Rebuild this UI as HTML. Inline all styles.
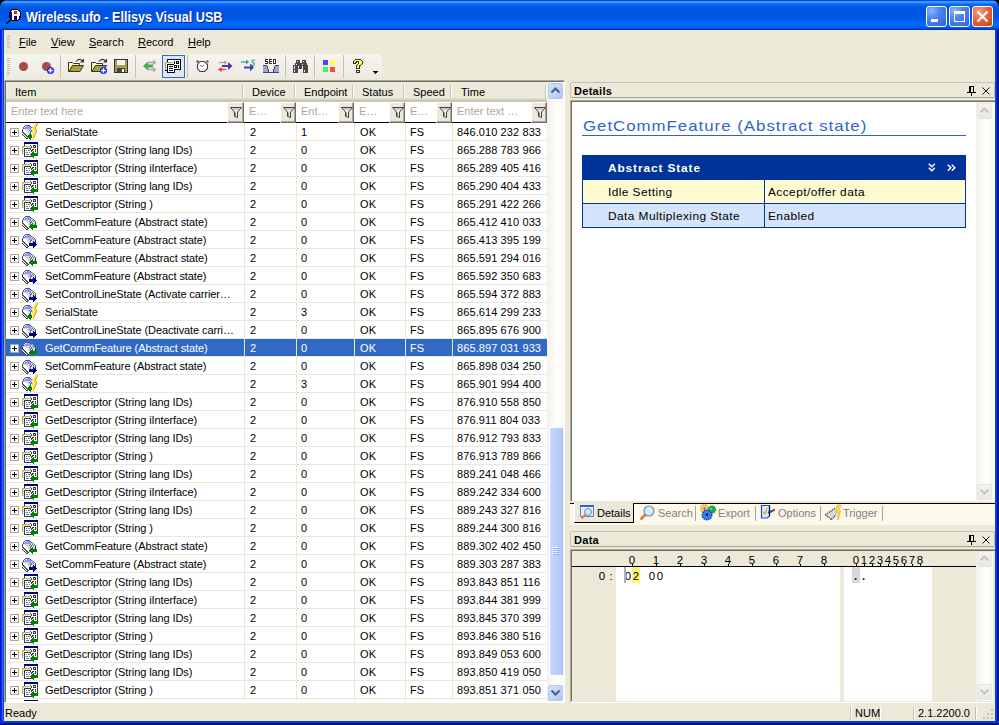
<!DOCTYPE html><html><head><meta charset="utf-8"><style>
*{margin:0;padding:0;box-sizing:border-box}
html,body{width:999px;height:725px;overflow:hidden;background:#000}
body{font-family:"Liberation Sans",sans-serif;font-size:11px;color:#000;position:relative}
.a{position:absolute}
.t{position:absolute;white-space:nowrap;line-height:13px}
svg{position:absolute;overflow:visible}
.sep{position:absolute;width:1px;background:#C5C2B2;border-right:1px solid #fff}
</style></head><body>
<svg width="0" height="0" style="position:absolute"><defs><symbol id="ig" viewBox="0 0 17 18" shape-rendering="crispEdges"><rect x="4" y="3" width="5" height="1" fill="#5454B4"/><rect x="3" y="4" width="1" height="1" fill="#5454B4"/><rect x="4" y="4" width="2" height="1" fill="#C8E4FF"/><rect x="6" y="4" width="3" height="1" fill="#9494F4"/><rect x="9" y="4" width="1" height="1" fill="#5454B4"/><rect x="2" y="5" width="1" height="1" fill="#5454B4"/><rect x="3" y="5" width="1" height="1" fill="#C8E4FF"/><rect x="4" y="5" width="6" height="1" fill="#9494F4"/><rect x="10" y="5" width="1" height="1" fill="#707070"/><rect x="11" y="5" width="1" height="1" fill="#A8A8A8"/><rect x="2" y="6" width="1" height="1" fill="#5454B4"/><rect x="3" y="6" width="7" height="1" fill="#9494F4"/><rect x="10" y="6" width="2" height="1" fill="#D8D8D8"/><rect x="12" y="6" width="1" height="1" fill="#707070"/><rect x="1" y="7" width="1" height="1" fill="#707070"/><rect x="2" y="7" width="7" height="1" fill="#D8D8D8"/><rect x="9" y="7" width="1" height="1" fill="#6C6CE0"/><rect x="10" y="7" width="1" height="1" fill="#D8D8D8"/><rect x="11" y="7" width="1" height="1" fill="#6C6CE0"/><rect x="12" y="7" width="1" height="1" fill="#D8D8D8"/><rect x="13" y="7" width="1" height="1" fill="#707070"/><rect x="1" y="8" width="1" height="1" fill="#3A3A3A"/><rect x="2" y="8" width="3" height="1" fill="#FFFFFF"/><rect x="5" y="8" width="3" height="1" fill="#D8D8D8"/><rect x="8" y="8" width="1" height="1" fill="#707070"/><rect x="9" y="8" width="1" height="1" fill="#D8D8D8"/><rect x="10" y="8" width="1" height="1" fill="#6C6CE0"/><rect x="11" y="8" width="1" height="1" fill="#D8D8D8"/><rect x="12" y="8" width="1" height="1" fill="#6C6CE0"/><rect x="13" y="8" width="1" height="1" fill="#D8D8D8"/><rect x="14" y="8" width="1" height="1" fill="#707070"/><rect x="1" y="9" width="1" height="1" fill="#3A3A3A"/><rect x="2" y="9" width="4" height="1" fill="#FFFFFF"/><rect x="6" y="9" width="3" height="1" fill="#D8D8D8"/><rect x="9" y="9" width="1" height="1" fill="#707070"/><rect x="10" y="9" width="1" height="1" fill="#6C6CE0"/><rect x="11" y="9" width="3" height="1" fill="#D8D8D8"/><rect x="14" y="9" width="1" height="1" fill="#3A3A3A"/><rect x="1" y="10" width="1" height="1" fill="#707070"/><rect x="2" y="10" width="1" height="1" fill="#3A3A3A"/><rect x="3" y="10" width="4" height="1" fill="#FFFFFF"/><rect x="7" y="10" width="2" height="1" fill="#D8D8D8"/><rect x="9" y="10" width="1" height="1" fill="#707070"/><rect x="10" y="10" width="1" height="1" fill="#FFFFFF"/><rect x="11" y="10" width="1" height="1" fill="#008000"/><rect x="12" y="10" width="2" height="1" fill="#D8D8D8"/><rect x="14" y="10" width="1" height="1" fill="#3A3A3A"/><rect x="1" y="11" width="1" height="1" fill="#FFFFFF"/><rect x="2" y="11" width="1" height="1" fill="#707070"/><rect x="3" y="11" width="1" height="1" fill="#3A3A3A"/><rect x="4" y="11" width="3" height="1" fill="#FFFFFF"/><rect x="7" y="11" width="2" height="1" fill="#D8D8D8"/><rect x="9" y="11" width="1" height="1" fill="#707070"/><rect x="10" y="11" width="2" height="1" fill="#008000"/><rect x="12" y="11" width="1" height="1" fill="#D8D8D8"/><rect x="13" y="11" width="1" height="1" fill="#A8A8A8"/><rect x="14" y="11" width="1" height="1" fill="#3A3A3A"/><rect x="1" y="12" width="1" height="1" fill="#3A3A3A"/><rect x="2" y="12" width="1" height="1" fill="#FFFFFF"/><rect x="3" y="12" width="1" height="1" fill="#707070"/><rect x="4" y="12" width="1" height="1" fill="#3A3A3A"/><rect x="5" y="12" width="3" height="1" fill="#FFFFFF"/><rect x="8" y="12" width="1" height="1" fill="#D8D8D8"/><rect x="9" y="12" width="7" height="1" fill="#008000"/><rect x="2" y="13" width="1" height="1" fill="#3A3A3A"/><rect x="3" y="13" width="1" height="1" fill="#FFFFFF"/><rect x="4" y="13" width="1" height="1" fill="#707070"/><rect x="5" y="13" width="1" height="1" fill="#3A3A3A"/><rect x="6" y="13" width="2" height="1" fill="#FFFFFF"/><rect x="8" y="13" width="8" height="1" fill="#008000"/><rect x="3" y="14" width="1" height="1" fill="#3A3A3A"/><rect x="4" y="14" width="1" height="1" fill="#FFFFFF"/><rect x="5" y="14" width="1" height="1" fill="#707070"/><rect x="6" y="14" width="1" height="1" fill="#3A3A3A"/><rect x="7" y="14" width="1" height="1" fill="#FFFFFF"/><rect x="8" y="14" width="1" height="1" fill="#707070"/><rect x="9" y="14" width="7" height="1" fill="#008000"/><rect x="4" y="15" width="1" height="1" fill="#3A3A3A"/><rect x="5" y="15" width="1" height="1" fill="#FFFFFF"/><rect x="6" y="15" width="1" height="1" fill="#707070"/><rect x="7" y="15" width="1" height="1" fill="#3A3A3A"/><rect x="10" y="15" width="2" height="1" fill="#008000"/><rect x="5" y="16" width="2" height="1" fill="#3A3A3A"/><rect x="11" y="16" width="1" height="1" fill="#008000"/></symbol><symbol id="ip" viewBox="0 0 17 18" shape-rendering="crispEdges"><rect x="4" y="3" width="5" height="1" fill="#5454B4"/><rect x="3" y="4" width="1" height="1" fill="#5454B4"/><rect x="4" y="4" width="2" height="1" fill="#C8E4FF"/><rect x="6" y="4" width="3" height="1" fill="#9494F4"/><rect x="9" y="4" width="1" height="1" fill="#5454B4"/><rect x="2" y="5" width="1" height="1" fill="#5454B4"/><rect x="3" y="5" width="1" height="1" fill="#C8E4FF"/><rect x="4" y="5" width="6" height="1" fill="#9494F4"/><rect x="10" y="5" width="1" height="1" fill="#707070"/><rect x="11" y="5" width="1" height="1" fill="#A8A8A8"/><rect x="2" y="6" width="1" height="1" fill="#5454B4"/><rect x="3" y="6" width="7" height="1" fill="#9494F4"/><rect x="10" y="6" width="2" height="1" fill="#D8D8D8"/><rect x="12" y="6" width="1" height="1" fill="#707070"/><rect x="1" y="7" width="1" height="1" fill="#707070"/><rect x="2" y="7" width="7" height="1" fill="#D8D8D8"/><rect x="9" y="7" width="1" height="1" fill="#6C6CE0"/><rect x="10" y="7" width="1" height="1" fill="#D8D8D8"/><rect x="11" y="7" width="1" height="1" fill="#6C6CE0"/><rect x="12" y="7" width="1" height="1" fill="#D8D8D8"/><rect x="13" y="7" width="1" height="1" fill="#707070"/><rect x="1" y="8" width="1" height="1" fill="#3A3A3A"/><rect x="2" y="8" width="3" height="1" fill="#FFFFFF"/><rect x="5" y="8" width="3" height="1" fill="#D8D8D8"/><rect x="8" y="8" width="1" height="1" fill="#707070"/><rect x="9" y="8" width="1" height="1" fill="#D8D8D8"/><rect x="10" y="8" width="1" height="1" fill="#6C6CE0"/><rect x="11" y="8" width="1" height="1" fill="#D8D8D8"/><rect x="12" y="8" width="1" height="1" fill="#6C6CE0"/><rect x="13" y="8" width="1" height="1" fill="#D8D8D8"/><rect x="14" y="8" width="1" height="1" fill="#707070"/><rect x="1" y="9" width="1" height="1" fill="#3A3A3A"/><rect x="2" y="9" width="4" height="1" fill="#FFFFFF"/><rect x="6" y="9" width="3" height="1" fill="#D8D8D8"/><rect x="9" y="9" width="1" height="1" fill="#707070"/><rect x="10" y="9" width="1" height="1" fill="#6C6CE0"/><rect x="11" y="9" width="3" height="1" fill="#D8D8D8"/><rect x="14" y="9" width="1" height="1" fill="#3A3A3A"/><rect x="1" y="10" width="1" height="1" fill="#707070"/><rect x="2" y="10" width="1" height="1" fill="#3A3A3A"/><rect x="3" y="10" width="4" height="1" fill="#FFFFFF"/><rect x="7" y="10" width="2" height="1" fill="#D8D8D8"/><rect x="9" y="10" width="1" height="1" fill="#707070"/><rect x="10" y="10" width="1" height="1" fill="#FFFFFF"/><rect x="11" y="10" width="1" height="1" fill="#D8D8D8"/><rect x="12" y="10" width="1" height="1" fill="#000080"/><rect x="13" y="10" width="1" height="1" fill="#D8D8D8"/><rect x="14" y="10" width="1" height="1" fill="#3A3A3A"/><rect x="1" y="11" width="1" height="1" fill="#FFFFFF"/><rect x="2" y="11" width="1" height="1" fill="#707070"/><rect x="3" y="11" width="1" height="1" fill="#3A3A3A"/><rect x="4" y="11" width="3" height="1" fill="#FFFFFF"/><rect x="7" y="11" width="2" height="1" fill="#D8D8D8"/><rect x="9" y="11" width="1" height="1" fill="#707070"/><rect x="10" y="11" width="1" height="1" fill="#FFFFFF"/><rect x="11" y="11" width="1" height="1" fill="#D8D8D8"/><rect x="12" y="11" width="2" height="1" fill="#000080"/><rect x="14" y="11" width="1" height="1" fill="#3A3A3A"/><rect x="1" y="12" width="1" height="1" fill="#3A3A3A"/><rect x="2" y="12" width="1" height="1" fill="#FFFFFF"/><rect x="3" y="12" width="1" height="1" fill="#707070"/><rect x="4" y="12" width="1" height="1" fill="#3A3A3A"/><rect x="5" y="12" width="3" height="1" fill="#FFFFFF"/><rect x="8" y="12" width="7" height="1" fill="#000080"/><rect x="2" y="13" width="1" height="1" fill="#3A3A3A"/><rect x="3" y="13" width="1" height="1" fill="#FFFFFF"/><rect x="4" y="13" width="1" height="1" fill="#707070"/><rect x="5" y="13" width="1" height="1" fill="#3A3A3A"/><rect x="6" y="13" width="2" height="1" fill="#FFFFFF"/><rect x="8" y="13" width="8" height="1" fill="#000080"/><rect x="3" y="14" width="1" height="1" fill="#3A3A3A"/><rect x="4" y="14" width="1" height="1" fill="#FFFFFF"/><rect x="5" y="14" width="1" height="1" fill="#707070"/><rect x="6" y="14" width="1" height="1" fill="#3A3A3A"/><rect x="7" y="14" width="1" height="1" fill="#FFFFFF"/><rect x="8" y="14" width="7" height="1" fill="#000080"/><rect x="4" y="15" width="1" height="1" fill="#3A3A3A"/><rect x="5" y="15" width="1" height="1" fill="#FFFFFF"/><rect x="6" y="15" width="1" height="1" fill="#707070"/><rect x="7" y="15" width="1" height="1" fill="#3A3A3A"/><rect x="12" y="15" width="2" height="1" fill="#000080"/><rect x="5" y="16" width="2" height="1" fill="#3A3A3A"/><rect x="12" y="16" width="1" height="1" fill="#000080"/></symbol><symbol id="id" viewBox="0 0 17 18" shape-rendering="crispEdges"><rect x="3" y="1" width="14" height="1" fill="#000080"/><rect x="3" y="2" width="14" height="1" fill="#000080"/><rect x="3" y="3" width="1" height="1" fill="#3A3A3A"/><rect x="4" y="3" width="12" height="1" fill="#FFFFFF"/><rect x="16" y="3" width="1" height="1" fill="#3A3A3A"/><rect x="3" y="4" width="1" height="1" fill="#3A3A3A"/><rect x="4" y="4" width="5" height="1" fill="#FFFFFF"/><rect x="9" y="4" width="1" height="1" fill="#3A3A3A"/><rect x="10" y="4" width="2" height="1" fill="#FFFFFF"/><rect x="12" y="4" width="3" height="1" fill="#3A3A3A"/><rect x="15" y="4" width="1" height="1" fill="#FFFFFF"/><rect x="16" y="4" width="1" height="1" fill="#3A3A3A"/><rect x="1" y="5" width="8" height="1" fill="#A8A8A8"/><rect x="9" y="5" width="1" height="1" fill="#FFFFFF"/><rect x="10" y="5" width="1" height="1" fill="#3A3A3A"/><rect x="11" y="5" width="1" height="1" fill="#FFFFFF"/><rect x="12" y="5" width="1" height="1" fill="#3A3A3A"/><rect x="13" y="5" width="1" height="1" fill="#FFFFFF"/><rect x="14" y="5" width="1" height="1" fill="#3A3A3A"/><rect x="15" y="5" width="1" height="1" fill="#FFFFFF"/><rect x="16" y="5" width="1" height="1" fill="#3A3A3A"/><rect x="1" y="6" width="1" height="1" fill="#A8A8A8"/><rect x="2" y="6" width="1" height="1" fill="#FFE800"/><rect x="3" y="6" width="1" height="1" fill="#FFFFFF"/><rect x="4" y="6" width="1" height="1" fill="#FFE800"/><rect x="5" y="6" width="1" height="1" fill="#FFFFFF"/><rect x="6" y="6" width="1" height="1" fill="#FFE800"/><rect x="7" y="6" width="1" height="1" fill="#FFFFFF"/><rect x="8" y="6" width="1" height="1" fill="#FFE800"/><rect x="9" y="6" width="1" height="1" fill="#FFFFFF"/><rect x="10" y="6" width="1" height="1" fill="#3A3A3A"/><rect x="11" y="6" width="1" height="1" fill="#FFFFFF"/><rect x="12" y="6" width="3" height="1" fill="#3A3A3A"/><rect x="15" y="6" width="1" height="1" fill="#FFFFFF"/><rect x="16" y="6" width="1" height="1" fill="#3A3A3A"/><rect x="1" y="7" width="1" height="1" fill="#A8A8A8"/><rect x="2" y="7" width="1" height="1" fill="#FFFFFF"/><rect x="3" y="7" width="7" height="1" fill="#3A3A3A"/><rect x="10" y="7" width="6" height="1" fill="#FFFFFF"/><rect x="16" y="7" width="1" height="1" fill="#3A3A3A"/><rect x="1" y="8" width="1" height="1" fill="#A8A8A8"/><rect x="2" y="8" width="1" height="1" fill="#FFE800"/><rect x="3" y="8" width="1" height="1" fill="#3A3A3A"/><rect x="4" y="8" width="5" height="1" fill="#FFFFFF"/><rect x="9" y="8" width="1" height="1" fill="#3A3A3A"/><rect x="10" y="8" width="1" height="1" fill="#FFFFFF"/><rect x="11" y="8" width="2" height="1" fill="#3A3A3A"/><rect x="13" y="8" width="1" height="1" fill="#FFFFFF"/><rect x="14" y="8" width="1" height="1" fill="#3A3A3A"/><rect x="15" y="8" width="1" height="1" fill="#FFFFFF"/><rect x="16" y="8" width="1" height="1" fill="#3A3A3A"/><rect x="1" y="9" width="1" height="1" fill="#A8A8A8"/><rect x="2" y="9" width="1" height="1" fill="#FFFFFF"/><rect x="3" y="9" width="1" height="1" fill="#3A3A3A"/><rect x="4" y="9" width="1" height="1" fill="#FFFFFF"/><rect x="5" y="9" width="1" height="1" fill="#6C6CE0"/><rect x="6" y="9" width="1" height="1" fill="#FFFFFF"/><rect x="7" y="9" width="2" height="1" fill="#6C6CE0"/><rect x="9" y="9" width="1" height="1" fill="#FFFFFF"/><rect x="10" y="9" width="2" height="1" fill="#3A3A3A"/><rect x="12" y="9" width="2" height="1" fill="#FFFFFF"/><rect x="14" y="9" width="1" height="1" fill="#3A3A3A"/><rect x="15" y="9" width="1" height="1" fill="#FFFFFF"/><rect x="16" y="9" width="1" height="1" fill="#3A3A3A"/><rect x="1" y="10" width="1" height="1" fill="#A8A8A8"/><rect x="2" y="10" width="1" height="1" fill="#FFE800"/><rect x="3" y="10" width="1" height="1" fill="#3A3A3A"/><rect x="4" y="10" width="6" height="1" fill="#FFFFFF"/><rect x="10" y="10" width="1" height="1" fill="#3A3A3A"/><rect x="11" y="10" width="1" height="1" fill="#FFFFFF"/><rect x="12" y="10" width="1" height="1" fill="#008000"/><rect x="13" y="10" width="1" height="1" fill="#FFFFFF"/><rect x="14" y="10" width="1" height="1" fill="#3A3A3A"/><rect x="15" y="10" width="1" height="1" fill="#FFFFFF"/><rect x="16" y="10" width="1" height="1" fill="#3A3A3A"/><rect x="1" y="11" width="1" height="1" fill="#A8A8A8"/><rect x="2" y="11" width="1" height="1" fill="#FFFFFF"/><rect x="3" y="11" width="1" height="1" fill="#3A3A3A"/><rect x="4" y="11" width="1" height="1" fill="#FFFFFF"/><rect x="5" y="11" width="2" height="1" fill="#6C6CE0"/><rect x="7" y="11" width="1" height="1" fill="#FFFFFF"/><rect x="8" y="11" width="1" height="1" fill="#6C6CE0"/><rect x="9" y="11" width="2" height="1" fill="#FFFFFF"/><rect x="11" y="11" width="2" height="1" fill="#008000"/><rect x="13" y="11" width="3" height="1" fill="#FFFFFF"/><rect x="16" y="11" width="1" height="1" fill="#3A3A3A"/><rect x="1" y="12" width="1" height="1" fill="#A8A8A8"/><rect x="2" y="12" width="1" height="1" fill="#FFE800"/><rect x="3" y="12" width="1" height="1" fill="#3A3A3A"/><rect x="4" y="12" width="6" height="1" fill="#FFFFFF"/><rect x="10" y="12" width="7" height="1" fill="#008000"/><rect x="3" y="13" width="1" height="1" fill="#3A3A3A"/><rect x="4" y="13" width="1" height="1" fill="#FFFFFF"/><rect x="5" y="13" width="3" height="1" fill="#6C6CE0"/><rect x="8" y="13" width="1" height="1" fill="#FFFFFF"/><rect x="9" y="13" width="8" height="1" fill="#008000"/><rect x="3" y="14" width="1" height="1" fill="#3A3A3A"/><rect x="4" y="14" width="6" height="1" fill="#FFFFFF"/><rect x="10" y="14" width="7" height="1" fill="#008000"/><rect x="3" y="15" width="8" height="1" fill="#3A3A3A"/><rect x="11" y="15" width="2" height="1" fill="#008000"/><rect x="12" y="16" width="1" height="1" fill="#008000"/></symbol><symbol id="is" viewBox="0 0 17 18" shape-rendering="crispEdges"><rect x="14" y="0" width="1" height="1" fill="#FFF8A0"/><rect x="15" y="0" width="1" height="1" fill="#FFE800"/><rect x="16" y="0" width="1" height="1" fill="#E8A030"/><rect x="13" y="1" width="1" height="1" fill="#FFF8A0"/><rect x="14" y="1" width="2" height="1" fill="#FFE800"/><rect x="16" y="1" width="1" height="1" fill="#E8A030"/><rect x="4" y="2" width="5" height="1" fill="#5454B4"/><rect x="13" y="2" width="1" height="1" fill="#FFF8A0"/><rect x="14" y="2" width="1" height="1" fill="#FFE800"/><rect x="15" y="2" width="1" height="1" fill="#E8A030"/><rect x="3" y="3" width="1" height="1" fill="#5454B4"/><rect x="4" y="3" width="2" height="1" fill="#C8E4FF"/><rect x="6" y="3" width="3" height="1" fill="#9494F4"/><rect x="9" y="3" width="1" height="1" fill="#5454B4"/><rect x="12" y="3" width="1" height="1" fill="#FFF8A0"/><rect x="13" y="3" width="2" height="1" fill="#FFE800"/><rect x="15" y="3" width="1" height="1" fill="#E8A030"/><rect x="2" y="4" width="1" height="1" fill="#5454B4"/><rect x="3" y="4" width="1" height="1" fill="#C8E4FF"/><rect x="4" y="4" width="6" height="1" fill="#9494F4"/><rect x="10" y="4" width="1" height="1" fill="#707070"/><rect x="11" y="4" width="1" height="1" fill="#A8A8A8"/><rect x="12" y="4" width="1" height="1" fill="#FFF8A0"/><rect x="13" y="4" width="1" height="1" fill="#FFE800"/><rect x="14" y="4" width="1" height="1" fill="#E8A030"/><rect x="2" y="5" width="1" height="1" fill="#5454B4"/><rect x="3" y="5" width="7" height="1" fill="#9494F4"/><rect x="10" y="5" width="1" height="1" fill="#D8D8D8"/><rect x="11" y="5" width="1" height="1" fill="#FFF8A0"/><rect x="12" y="5" width="2" height="1" fill="#FFE800"/><rect x="14" y="5" width="1" height="1" fill="#E8A030"/><rect x="1" y="6" width="1" height="1" fill="#707070"/><rect x="2" y="6" width="7" height="1" fill="#D8D8D8"/><rect x="9" y="6" width="1" height="1" fill="#6C6CE0"/><rect x="10" y="6" width="1" height="1" fill="#D8D8D8"/><rect x="11" y="6" width="1" height="1" fill="#FFF8A0"/><rect x="12" y="6" width="3" height="1" fill="#FFE800"/><rect x="15" y="6" width="1" height="1" fill="#E8A030"/><rect x="1" y="7" width="1" height="1" fill="#3A3A3A"/><rect x="2" y="7" width="3" height="1" fill="#FFFFFF"/><rect x="5" y="7" width="3" height="1" fill="#D8D8D8"/><rect x="8" y="7" width="1" height="1" fill="#707070"/><rect x="9" y="7" width="1" height="1" fill="#D8D8D8"/><rect x="10" y="7" width="1" height="1" fill="#6C6CE0"/><rect x="11" y="7" width="1" height="1" fill="#D8D8D8"/><rect x="12" y="7" width="1" height="1" fill="#FFF8A0"/><rect x="13" y="7" width="2" height="1" fill="#FFE800"/><rect x="15" y="7" width="1" height="1" fill="#E8A030"/><rect x="1" y="8" width="1" height="1" fill="#3A3A3A"/><rect x="2" y="8" width="4" height="1" fill="#FFFFFF"/><rect x="6" y="8" width="3" height="1" fill="#D8D8D8"/><rect x="9" y="8" width="1" height="1" fill="#707070"/><rect x="10" y="8" width="1" height="1" fill="#6C6CE0"/><rect x="11" y="8" width="2" height="1" fill="#D8D8D8"/><rect x="13" y="8" width="1" height="1" fill="#FFF8A0"/><rect x="14" y="8" width="1" height="1" fill="#FFE800"/><rect x="15" y="8" width="1" height="1" fill="#E8A030"/><rect x="1" y="9" width="1" height="1" fill="#707070"/><rect x="2" y="9" width="1" height="1" fill="#3A3A3A"/><rect x="3" y="9" width="4" height="1" fill="#FFFFFF"/><rect x="7" y="9" width="2" height="1" fill="#D8D8D8"/><rect x="9" y="9" width="1" height="1" fill="#707070"/><rect x="10" y="9" width="1" height="1" fill="#FFFFFF"/><rect x="11" y="9" width="1" height="1" fill="#D8D8D8"/><rect x="12" y="9" width="1" height="1" fill="#FFF8A0"/><rect x="13" y="9" width="2" height="1" fill="#FFE800"/><rect x="15" y="9" width="1" height="1" fill="#E8A030"/><rect x="1" y="10" width="1" height="1" fill="#FFFFFF"/><rect x="2" y="10" width="1" height="1" fill="#707070"/><rect x="3" y="10" width="1" height="1" fill="#3A3A3A"/><rect x="4" y="10" width="3" height="1" fill="#FFFFFF"/><rect x="7" y="10" width="2" height="1" fill="#D8D8D8"/><rect x="9" y="10" width="1" height="1" fill="#008000"/><rect x="10" y="10" width="1" height="1" fill="#FFFFFF"/><rect x="11" y="10" width="1" height="1" fill="#D8D8D8"/><rect x="12" y="10" width="1" height="1" fill="#FFF8A0"/><rect x="13" y="10" width="1" height="1" fill="#FFE800"/><rect x="14" y="10" width="1" height="1" fill="#E8A030"/><rect x="1" y="11" width="1" height="1" fill="#3A3A3A"/><rect x="2" y="11" width="1" height="1" fill="#FFFFFF"/><rect x="3" y="11" width="1" height="1" fill="#707070"/><rect x="4" y="11" width="1" height="1" fill="#3A3A3A"/><rect x="5" y="11" width="3" height="1" fill="#FFFFFF"/><rect x="8" y="11" width="2" height="1" fill="#008000"/><rect x="10" y="11" width="1" height="1" fill="#D8D8D8"/><rect x="11" y="11" width="1" height="1" fill="#FFF8A0"/><rect x="12" y="11" width="2" height="1" fill="#FFE800"/><rect x="14" y="11" width="1" height="1" fill="#E8A030"/><rect x="2" y="12" width="1" height="1" fill="#3A3A3A"/><rect x="3" y="12" width="1" height="1" fill="#FFFFFF"/><rect x="4" y="12" width="1" height="1" fill="#707070"/><rect x="5" y="12" width="1" height="1" fill="#3A3A3A"/><rect x="6" y="12" width="1" height="1" fill="#FFFFFF"/><rect x="7" y="12" width="4" height="1" fill="#008000"/><rect x="11" y="12" width="1" height="1" fill="#FFF8A0"/><rect x="12" y="12" width="1" height="1" fill="#FFE800"/><rect x="13" y="12" width="1" height="1" fill="#E8A030"/><rect x="3" y="13" width="1" height="1" fill="#3A3A3A"/><rect x="4" y="13" width="1" height="1" fill="#FFFFFF"/><rect x="5" y="13" width="1" height="1" fill="#707070"/><rect x="6" y="13" width="5" height="1" fill="#008000"/><rect x="11" y="13" width="1" height="1" fill="#FFF8A0"/><rect x="12" y="13" width="1" height="1" fill="#FFE800"/><rect x="13" y="13" width="1" height="1" fill="#E8A030"/><rect x="4" y="14" width="1" height="1" fill="#3A3A3A"/><rect x="5" y="14" width="1" height="1" fill="#FFFFFF"/><rect x="6" y="14" width="1" height="1" fill="#707070"/><rect x="7" y="14" width="4" height="1" fill="#008000"/><rect x="11" y="14" width="1" height="1" fill="#FFF8A0"/><rect x="12" y="14" width="1" height="1" fill="#E8A030"/><rect x="5" y="15" width="2" height="1" fill="#3A3A3A"/><rect x="8" y="15" width="2" height="1" fill="#008000"/><rect x="11" y="15" width="1" height="1" fill="#FFF8A0"/><rect x="12" y="15" width="1" height="1" fill="#E8A030"/><rect x="9" y="16" width="1" height="1" fill="#008000"/><rect x="11" y="16" width="1" height="1" fill="#FFE800"/><rect x="11" y="17" width="1" height="1" fill="#FFF8A0"/></symbol></defs></svg>
<div class="a" style="left:0;top:0;width:999px;height:725px;background:#0A46D6;border-radius:8px 8px 0 0;overflow:hidden">
<div class="a" style="left:0;top:0;width:999px;height:30px;background:linear-gradient(#0040D8 0,#0A4EE0 1px,#3E96FF 1px,#3E96FF 3px,#1A7AFF 3px,#0A66F0 5px,#005AE4 7px,#0054E3 9px,#0054E3 17px,#0060F2 21px,#006AFF 23px,#0064F8 26px,#0058E8 28px,#0040C0 29px,#0030A8 30px)"></div>
<div class="a" style="left:0;top:30px;width:4px;height:695px;background:linear-gradient(90deg,#0010D8 0,#0010D8 1px,#0030E8 1px,#0030E8 2px,#1870F0 2px,#1870F0 3px,#0048E0 3px)"></div>
<div class="a" style="left:995px;top:30px;width:4px;height:695px;background:linear-gradient(90deg,#0040F0 0,#0040F0 1px,#0038E0 1px,#0038E0 2px,#001890 2px,#001890 3px,#001080 3px)"></div>
<div class="a" style="left:0;top:721px;width:999px;height:4px;background:linear-gradient(#0040F0 0,#0040F0 1px,#0038D8 1px,#0038D8 2px,#00188C 2px,#00188C 3px,#001080 3px)"></div>
</div>
<svg style="left:5px;top:7px" width="17" height="17" viewBox="0 0 17 17" shape-rendering="crispEdges"><rect x="7" y="2" width="6" height="1" fill="#000"/><rect x="5" y="3" width="2" height="1" fill="#000"/><rect x="7" y="3" width="6" height="1" fill="#fff"/><rect x="13" y="3" width="2" height="1" fill="#000"/><rect x="5" y="4" width="1" height="1" fill="#000"/><rect x="6" y="4" width="3" height="1" fill="#fff"/><rect x="9" y="4" width="3" height="1" fill="#E82000"/><rect x="12" y="4" width="2" height="1" fill="#fff"/><rect x="14" y="4" width="1" height="1" fill="#000"/><rect x="4" y="5" width="1" height="1" fill="#000"/><rect x="5" y="5" width="2" height="1" fill="#000080"/><rect x="7" y="5" width="2" height="1" fill="#fff"/><rect x="9" y="5" width="3" height="1" fill="#E82000"/><rect x="12" y="5" width="3" height="1" fill="#fff"/><rect x="15" y="5" width="1" height="1" fill="#000"/><rect x="4" y="6" width="1" height="1" fill="#000"/><rect x="5" y="6" width="2" height="1" fill="#000080"/><rect x="7" y="6" width="2" height="1" fill="#fff"/><rect x="9" y="6" width="3" height="1" fill="#E82000"/><rect x="12" y="6" width="3" height="1" fill="#fff"/><rect x="15" y="6" width="1" height="1" fill="#000"/><rect x="4" y="7" width="1" height="1" fill="#000"/><rect x="5" y="7" width="2" height="1" fill="#000080"/><rect x="7" y="7" width="8" height="1" fill="#fff"/><rect x="15" y="7" width="1" height="1" fill="#000"/><rect x="4" y="8" width="1" height="1" fill="#000"/><rect x="5" y="8" width="2" height="1" fill="#000080"/><rect x="7" y="8" width="8" height="1" fill="#fff"/><rect x="15" y="8" width="1" height="1" fill="#000"/><rect x="4" y="9" width="1" height="1" fill="#000"/><rect x="5" y="9" width="2" height="1" fill="#000080"/><rect x="7" y="9" width="2" height="1" fill="#fff"/><rect x="9" y="9" width="3" height="1" fill="#000080"/><rect x="12" y="9" width="2" height="1" fill="#fff"/><rect x="14" y="9" width="1" height="1" fill="#000080"/><rect x="15" y="9" width="1" height="1" fill="#000"/><rect x="4" y="10" width="1" height="1" fill="#000"/><rect x="5" y="10" width="2" height="1" fill="#000080"/><rect x="7" y="10" width="2" height="1" fill="#fff"/><rect x="9" y="10" width="3" height="1" fill="#000080"/><rect x="12" y="10" width="2" height="1" fill="#fff"/><rect x="14" y="10" width="1" height="1" fill="#000080"/><rect x="15" y="10" width="1" height="1" fill="#000"/><rect x="5" y="11" width="1" height="1" fill="#000"/><rect x="6" y="11" width="1" height="1" fill="#000080"/><rect x="7" y="11" width="2" height="1" fill="#fff"/><rect x="9" y="11" width="3" height="1" fill="#000080"/><rect x="12" y="11" width="2" height="1" fill="#fff"/><rect x="14" y="11" width="1" height="1" fill="#000"/><rect x="5" y="12" width="2" height="1" fill="#000"/><rect x="7" y="12" width="2" height="1" fill="#fff"/><rect x="9" y="12" width="3" height="1" fill="#000080"/><rect x="12" y="12" width="1" height="1" fill="#fff"/><rect x="13" y="12" width="2" height="1" fill="#000"/><rect x="4" y="13" width="2" height="1" fill="#000"/><rect x="7" y="13" width="6" height="1" fill="#000"/><rect x="3" y="14" width="2" height="1" fill="#000"/><rect x="1" y="15" width="3" height="1" fill="#000"/><rect x="1" y="16" width="2" height="1" fill="#000"/></svg>
<div class="t" style="left:26px;top:9px;font-size:14px;font-weight:bold;color:#fff;text-shadow:1px 1px 0 #0A1E8C;line-height:16px;transform:scaleX(0.9);transform-origin:0 0">Wireless.ufo - Ellisys Visual USB</div>
<div class="a" style="left:926px;top:6px;width:21px;height:21px;border:1px solid #fff;border-radius:3px;background:radial-gradient(circle at 25% 20%,#8FB5FF 0,#4F86F0 35%,#3A6FE8 75%,#2A5ED8 100%)"><div class="a" style="left:4px;top:12px;width:7px;height:3px;background:#fff"></div></div>
<div class="a" style="left:949px;top:6px;width:21px;height:21px;border:1px solid #fff;border-radius:3px;background:radial-gradient(circle at 25% 20%,#8FB5FF 0,#4F86F0 35%,#3A6FE8 75%,#2A5ED8 100%)"><div class="a" style="left:4px;top:4px;width:11px;height:11px;border:1px solid #fff;border-top-width:3px"></div></div>
<div class="a" style="left:972px;top:6px;width:21px;height:21px;border:1px solid #fff;border-radius:3px;background:radial-gradient(circle at 30% 25%,#F4A088 0,#E66A47 40%,#D84A24 80%,#C43A1A 100%)"><svg style="left:3px;top:3px" width="13" height="13" viewBox="0 0 13 13"><path d="M1.5 1.5L11.5 11.5M11.5 1.5L1.5 11.5" stroke="#fff" stroke-width="2.2"/></svg></div>
<div class="a" style="left:4px;top:30px;width:991px;height:691px;background:#ECE9D8"></div>
<div class="a" style="left:7px;top:35px;width:3px;height:1px;background:#C1BEB0"></div>
<div class="a" style="left:7px;top:37px;width:3px;height:1px;background:#C1BEB0"></div>
<div class="a" style="left:7px;top:39px;width:3px;height:1px;background:#C1BEB0"></div>
<div class="a" style="left:7px;top:41px;width:3px;height:1px;background:#C1BEB0"></div>
<div class="a" style="left:7px;top:43px;width:3px;height:1px;background:#C1BEB0"></div>
<div class="a" style="left:7px;top:45px;width:3px;height:1px;background:#C1BEB0"></div>
<div class="a" style="left:7px;top:47px;width:3px;height:1px;background:#C1BEB0"></div>
<div class="t" style="left:19px;top:36px"><u>F</u>ile</div>
<div class="t" style="left:51px;top:36px"><u>V</u>iew</div>
<div class="t" style="left:89px;top:36px"><u>S</u>earch</div>
<div class="t" style="left:138px;top:36px"><u>R</u>ecord</div>
<div class="t" style="left:188px;top:36px"><u>H</u>elp</div>
<div class="a" style="left:4px;top:54px;width:378px;height:25px;background:linear-gradient(#F6F5EE,#ECEAE0);border-radius:0 3px 3px 0"></div>
<div class="a" style="left:7px;top:58px;width:3px;height:1px;background:#C1BEB0"></div>
<div class="a" style="left:7px;top:60px;width:3px;height:1px;background:#C1BEB0"></div>
<div class="a" style="left:7px;top:62px;width:3px;height:1px;background:#C1BEB0"></div>
<div class="a" style="left:7px;top:64px;width:3px;height:1px;background:#C1BEB0"></div>
<div class="a" style="left:7px;top:66px;width:3px;height:1px;background:#C1BEB0"></div>
<div class="a" style="left:7px;top:68px;width:3px;height:1px;background:#C1BEB0"></div>
<div class="a" style="left:7px;top:70px;width:3px;height:1px;background:#C1BEB0"></div>
<div class="a" style="left:7px;top:72px;width:3px;height:1px;background:#C1BEB0"></div>
<div class="a" style="left:7px;top:74px;width:3px;height:1px;background:#C1BEB0"></div>
<div class="a" style="left:60px;top:55px;width:1px;height:23px;background:#C5C2B2"></div>
<div class="a" style="left:135px;top:55px;width:1px;height:23px;background:#C5C2B2"></div>
<div class="a" style="left:187px;top:55px;width:1px;height:23px;background:#C5C2B2"></div>
<div class="a" style="left:285px;top:55px;width:1px;height:23px;background:#C5C2B2"></div>
<div class="a" style="left:314px;top:55px;width:1px;height:23px;background:#C5C2B2"></div>
<div class="a" style="left:343px;top:55px;width:1px;height:23px;background:#C5C2B2"></div>
<div class="a" style="left:162px;top:55px;width:23px;height:23px;border:1px solid #3169C6;background:#E1E6EE"></div>
<svg style="left:19px;top:62px" width="9" height="9" viewBox="0 0 9 9" ><circle cx="4.5" cy="4.5" r="4.5" fill="#A64A4A"/></svg>
<svg style="left:42px;top:62px" width="14" height="13" viewBox="0 0 14 13" ><circle cx="4.5" cy="4.5" r="4.5" fill="#A64A4A"/><circle cx="8.5" cy="8.5" r="3.6" fill="#2B2BF5"/><path d="M6.3 8.5H10.7M8.5 6.3V10.7" stroke="#fff" stroke-width="1.3"/></svg>
<svg style="left:68px;top:59px" width="16" height="14" viewBox="0 0 16 14" ><path d="M0.5 3.5H4.5L5.5 4.5H11.5V6.5H5L1.5 12.5H0.5Z" fill="#FFFF9C" stroke="#333" stroke-width="1"/><path d="M1 12.5L4.5 6.5H15.5L12 12.5Z" fill="#A8A040" stroke="#333" stroke-width="1"/><path d="M8 2.5Q11.5 -1.5 14.5 2" fill="none" stroke="#333" stroke-width="1.1"/><path d="M12 3.5H16V-0.5Z" fill="#333"/></svg>
<svg style="left:91px;top:59px" width="17" height="16" viewBox="0 0 17 16" ><path d="M0.5 3.5H4.5L5.5 4.5H11.5V6.5H5L1.5 12.5H0.5Z" fill="#FFFF9C" stroke="#333" stroke-width="1"/><path d="M1 12.5L4.5 6.5H15.5L12 12.5Z" fill="#A8A040" stroke="#333" stroke-width="1"/><path d="M8 2.5Q11.5 -1.5 14.5 2" fill="none" stroke="#333" stroke-width="1.1"/><path d="M12 3.5H16V-0.5Z" fill="#333"/><circle cx="12.5" cy="11.5" r="3.6" fill="#2B2BF5"/><path d="M10.3 11.5H14.7M12.5 9.3V13.7" stroke="#fff" stroke-width="1.3"/></svg>
<svg style="left:114px;top:59px" width="14" height="14" viewBox="0 0 14 14" shape-rendering="crispEdges"><rect x="0.5" y="0.5" width="13" height="13" fill="#A8A040" stroke="#333"/><rect x="3" y="1" width="8" height="5" fill="#F4F3EE"/><rect x="3" y="9" width="8" height="4" fill="#444"/><rect x="8" y="10" width="2" height="3" fill="#fff"/></svg>
<svg style="left:143px;top:60px" width="15" height="12" viewBox="0 0 15 12" ><path d="M0 6L5 1.5V4.5H10V7.5H5V10.5Z" fill="#4CA64C"/><path d="M5 2.5H12M10 0.5L12.5 2.5L10 4.5M5 9.5H12M10 7.5L12.5 9.5L10 11.5" stroke="#A8A8A8" stroke-width="1.3" fill="none"/></svg>
<svg style="left:162px;top:59px" width="23" height="14" viewBox="0 0 23 14" shape-rendering="crispEdges"><rect x="5" y="0" width="14" height="1" fill="#000080"/><rect x="5" y="1" width="1" height="1" fill="#000"/><rect x="6" y="1" width="12" height="1" fill="#fff"/><rect x="18" y="1" width="1" height="1" fill="#000"/><rect x="5" y="2" width="1" height="1" fill="#000"/><rect x="6" y="2" width="6" height="1" fill="#fff"/><rect x="12" y="2" width="1" height="1" fill="#000"/><rect x="13" y="2" width="1" height="1" fill="#fff"/><rect x="14" y="2" width="3" height="1" fill="#000"/><rect x="17" y="2" width="1" height="1" fill="#fff"/><rect x="18" y="2" width="1" height="1" fill="#000"/><rect x="3" y="3" width="8" height="1" fill="#A0A0A0"/><rect x="11" y="3" width="1" height="1" fill="#fff"/><rect x="12" y="3" width="1" height="1" fill="#000"/><rect x="13" y="3" width="1" height="1" fill="#fff"/><rect x="14" y="3" width="1" height="1" fill="#000"/><rect x="15" y="3" width="1" height="1" fill="#fff"/><rect x="16" y="3" width="1" height="1" fill="#000"/><rect x="17" y="3" width="1" height="1" fill="#fff"/><rect x="18" y="3" width="1" height="1" fill="#000"/><rect x="3" y="4" width="1" height="1" fill="#A0A0A0"/><rect x="4" y="4" width="1" height="1" fill="#FFE800"/><rect x="5" y="4" width="1" height="1" fill="#fff"/><rect x="6" y="4" width="1" height="1" fill="#FFE800"/><rect x="7" y="4" width="1" height="1" fill="#fff"/><rect x="8" y="4" width="1" height="1" fill="#FFE800"/><rect x="9" y="4" width="3" height="1" fill="#fff"/><rect x="12" y="4" width="1" height="1" fill="#000"/><rect x="13" y="4" width="1" height="1" fill="#fff"/><rect x="14" y="4" width="3" height="1" fill="#000"/><rect x="17" y="4" width="1" height="1" fill="#fff"/><rect x="18" y="4" width="1" height="1" fill="#000"/><rect x="3" y="5" width="1" height="1" fill="#A0A0A0"/><rect x="4" y="5" width="1" height="1" fill="#fff"/><rect x="5" y="5" width="7" height="1" fill="#000"/><rect x="12" y="5" width="6" height="1" fill="#fff"/><rect x="18" y="5" width="1" height="1" fill="#000"/><rect x="3" y="6" width="1" height="1" fill="#A0A0A0"/><rect x="4" y="6" width="1" height="1" fill="#FFE800"/><rect x="5" y="6" width="1" height="1" fill="#000"/><rect x="6" y="6" width="6" height="1" fill="#fff"/><rect x="12" y="6" width="3" height="1" fill="#000"/><rect x="15" y="6" width="1" height="1" fill="#fff"/><rect x="16" y="6" width="1" height="1" fill="#000"/><rect x="17" y="6" width="1" height="1" fill="#fff"/><rect x="18" y="6" width="1" height="1" fill="#000"/><rect x="3" y="7" width="1" height="1" fill="#A0A0A0"/><rect x="4" y="7" width="1" height="1" fill="#fff"/><rect x="5" y="7" width="1" height="1" fill="#000"/><rect x="6" y="7" width="1" height="1" fill="#fff"/><rect x="7" y="7" width="4" height="1" fill="#000080"/><rect x="11" y="7" width="1" height="1" fill="#fff"/><rect x="12" y="7" width="1" height="1" fill="#000"/><rect x="13" y="7" width="1" height="1" fill="#fff"/><rect x="14" y="7" width="1" height="1" fill="#000"/><rect x="15" y="7" width="1" height="1" fill="#fff"/><rect x="16" y="7" width="1" height="1" fill="#000"/><rect x="17" y="7" width="1" height="1" fill="#fff"/><rect x="18" y="7" width="1" height="1" fill="#000"/><rect x="3" y="8" width="1" height="1" fill="#A0A0A0"/><rect x="4" y="8" width="1" height="1" fill="#FFE800"/><rect x="5" y="8" width="1" height="1" fill="#000"/><rect x="6" y="8" width="6" height="1" fill="#fff"/><rect x="12" y="8" width="3" height="1" fill="#000"/><rect x="15" y="8" width="1" height="1" fill="#fff"/><rect x="16" y="8" width="1" height="1" fill="#000"/><rect x="17" y="8" width="1" height="1" fill="#fff"/><rect x="18" y="8" width="1" height="1" fill="#000"/><rect x="3" y="9" width="1" height="1" fill="#A0A0A0"/><rect x="4" y="9" width="1" height="1" fill="#fff"/><rect x="5" y="9" width="1" height="1" fill="#000"/><rect x="6" y="9" width="1" height="1" fill="#fff"/><rect x="7" y="9" width="4" height="1" fill="#000080"/><rect x="11" y="9" width="7" height="1" fill="#fff"/><rect x="18" y="9" width="1" height="1" fill="#000"/><rect x="3" y="10" width="1" height="1" fill="#A0A0A0"/><rect x="4" y="10" width="1" height="1" fill="#FFE800"/><rect x="5" y="10" width="1" height="1" fill="#000"/><rect x="6" y="10" width="6" height="1" fill="#fff"/><rect x="12" y="10" width="7" height="1" fill="#000"/><rect x="3" y="11" width="3" height="1" fill="#000"/><rect x="6" y="11" width="1" height="1" fill="#fff"/><rect x="7" y="11" width="4" height="1" fill="#000080"/><rect x="11" y="11" width="1" height="1" fill="#fff"/><rect x="12" y="11" width="1" height="1" fill="#000"/><rect x="5" y="12" width="1" height="1" fill="#000"/><rect x="6" y="12" width="6" height="1" fill="#fff"/><rect x="12" y="12" width="1" height="1" fill="#000"/><rect x="5" y="13" width="8" height="1" fill="#000"/></svg>
<svg style="left:196px;top:60px" width="13" height="13" viewBox="0 0 13 13" ><path d="M4 1.5H8.5L11.5 4.5V8.5L8.5 11.5H4L1.5 8.5V4.5Z" fill="#fff" stroke="#404040" stroke-width="1.1"/><path d="M4.5 5L6.2 6.8L8 5" stroke="#505050" fill="none" stroke-width="0.9"/><rect x="0.5" y="0.5" width="2" height="2" fill="#404040"/><rect x="10.5" y="0.5" width="2" height="2" fill="#404040"/></svg>
<svg style="left:218px;top:60px" width="15" height="13" viewBox="0 0 15 13" ><path d="M1 2.5H7" stroke="#A0A0A0" stroke-width="1.2"/><path d="M6.5 0L9 2.5L6.5 5Z" fill="#A0A0A0"/><path d="M4 5H10V2L14.5 6L10 10V7H4Z" fill="#4040A8"/><path d="M3 9.5H8" stroke="#FF3030" stroke-width="1.3"/><path d="M3.5 7L0 9.5L3.5 12Z" fill="#FF3030"/></svg>
<svg style="left:241px;top:59px" width="16" height="14" viewBox="0 0 16 14" ><path d="M0 3H5.5" stroke="#30A0A0" stroke-width="1.3"/><path d="M5 0.5L8 3L5 5.5Z" fill="#30A0A0"/><path d="M14 1.6Q12.5 0.6 11.3 1.4Q10.4 2.6 12.2 3.6Q14 4.6 13.2 5.8Q12 6.8 10.4 5.9" stroke="#30A0A0" stroke-width="1.1" fill="none"/><path d="M3 7.5H9V4.5L13 8.5L9 12.5V9.5H3Z" fill="#4040A8"/></svg>
<svg style="left:261px;top:57px" width="18" height="16" viewBox="0 0 18 16" shape-rendering="crispEdges"><rect x="4" y="2" width="3" height="1" fill="#303030"/><rect x="8" y="2" width="3" height="1" fill="#303030"/><rect x="12" y="2" width="3" height="1" fill="#303030"/><rect x="4" y="3" width="1" height="1" fill="#303030"/><rect x="8" y="3" width="1" height="1" fill="#303030"/><rect x="12" y="3" width="1" height="1" fill="#303030"/><rect x="14" y="3" width="1" height="1" fill="#303030"/><rect x="4" y="4" width="3" height="1" fill="#303030"/><rect x="8" y="4" width="3" height="1" fill="#303030"/><rect x="12" y="4" width="1" height="1" fill="#303030"/><rect x="14" y="4" width="1" height="1" fill="#303030"/><rect x="6" y="5" width="1" height="1" fill="#303030"/><rect x="8" y="5" width="1" height="1" fill="#303030"/><rect x="12" y="5" width="1" height="1" fill="#303030"/><rect x="14" y="5" width="1" height="1" fill="#303030"/><rect x="4" y="6" width="3" height="1" fill="#303030"/><rect x="8" y="6" width="3" height="1" fill="#303030"/><rect x="12" y="6" width="3" height="1" fill="#303030"/><rect x="2" y="8" width="4" height="1" fill="#3C3CB4"/><rect x="14" y="8" width="4" height="1" fill="#3C3CB4"/><rect x="2" y="9" width="4" height="1" fill="#A8A8A8"/><rect x="6" y="9" width="1" height="1" fill="#3C3CB4"/><rect x="13" y="9" width="1" height="1" fill="#3C3CB4"/><rect x="14" y="9" width="4" height="1" fill="#A8A8A8"/><rect x="2" y="10" width="4" height="1" fill="#A8A8A8"/><rect x="6" y="10" width="1" height="1" fill="#3C3CB4"/><rect x="13" y="10" width="1" height="1" fill="#3C3CB4"/><rect x="14" y="10" width="4" height="1" fill="#A8A8A8"/><rect x="2" y="11" width="4" height="1" fill="#A8A8A8"/><rect x="6" y="11" width="1" height="1" fill="#3C3CB4"/><rect x="13" y="11" width="1" height="1" fill="#3C3CB4"/><rect x="14" y="11" width="4" height="1" fill="#A8A8A8"/><rect x="2" y="12" width="5" height="1" fill="#A8A8A8"/><rect x="7" y="12" width="1" height="1" fill="#3C3CB4"/><rect x="12" y="12" width="1" height="1" fill="#3C3CB4"/><rect x="13" y="12" width="5" height="1" fill="#A8A8A8"/><rect x="2" y="13" width="5" height="1" fill="#A8A8A8"/><rect x="7" y="13" width="1" height="1" fill="#3C3CB4"/><rect x="12" y="13" width="1" height="1" fill="#3C3CB4"/><rect x="13" y="13" width="5" height="1" fill="#A8A8A8"/><rect x="2" y="14" width="5" height="1" fill="#A8A8A8"/><rect x="7" y="14" width="1" height="1" fill="#3C3CB4"/><rect x="12" y="14" width="1" height="1" fill="#3C3CB4"/><rect x="13" y="14" width="5" height="1" fill="#A8A8A8"/><rect x="2" y="15" width="16" height="1" fill="#3C3CB4"/></svg>
<svg style="left:293px;top:60px" width="15" height="13" viewBox="0 0 15 13" shape-rendering="crispEdges"><rect x="3" y="0" width="4" height="1" fill="#484848"/><rect x="9" y="0" width="4" height="1" fill="#484848"/><rect x="3" y="1" width="1" height="1" fill="#484848"/><rect x="4" y="1" width="1" height="1" fill="#E8E8E8"/><rect x="5" y="1" width="2" height="1" fill="#484848"/><rect x="9" y="1" width="1" height="1" fill="#484848"/><rect x="10" y="1" width="1" height="1" fill="#E8E8E8"/><rect x="11" y="1" width="2" height="1" fill="#484848"/><rect x="3" y="2" width="4" height="1" fill="#484848"/><rect x="9" y="2" width="4" height="1" fill="#484848"/><rect x="2" y="3" width="12" height="1" fill="#484848"/><rect x="2" y="4" width="1" height="1" fill="#484848"/><rect x="3" y="4" width="1" height="1" fill="#E8E8E8"/><rect x="4" y="4" width="5" height="1" fill="#484848"/><rect x="9" y="4" width="1" height="1" fill="#E8E8E8"/><rect x="10" y="4" width="4" height="1" fill="#484848"/><rect x="0" y="5" width="15" height="1" fill="#484848"/><rect x="0" y="6" width="1" height="1" fill="#484848"/><rect x="1" y="6" width="1" height="1" fill="#E8E8E8"/><rect x="2" y="6" width="3" height="1" fill="#484848"/><rect x="5" y="6" width="1" height="1" fill="#E8E8E8"/><rect x="6" y="6" width="3" height="1" fill="#484848"/><rect x="9" y="6" width="1" height="1" fill="#E8E8E8"/><rect x="10" y="6" width="5" height="1" fill="#484848"/><rect x="0" y="7" width="1" height="1" fill="#484848"/><rect x="1" y="7" width="1" height="1" fill="#E8E8E8"/><rect x="2" y="7" width="3" height="1" fill="#484848"/><rect x="5" y="7" width="1" height="1" fill="#E8E8E8"/><rect x="6" y="7" width="3" height="1" fill="#484848"/><rect x="9" y="7" width="1" height="1" fill="#E8E8E8"/><rect x="10" y="7" width="5" height="1" fill="#484848"/><rect x="0" y="8" width="1" height="1" fill="#484848"/><rect x="1" y="8" width="1" height="1" fill="#E8E8E8"/><rect x="2" y="8" width="7" height="1" fill="#484848"/><rect x="9" y="8" width="1" height="1" fill="#E8E8E8"/><rect x="10" y="8" width="5" height="1" fill="#484848"/><rect x="0" y="9" width="5" height="1" fill="#484848"/><rect x="10" y="9" width="5" height="1" fill="#484848"/><rect x="0" y="10" width="1" height="1" fill="#484848"/><rect x="1" y="10" width="1" height="1" fill="#E8E8E8"/><rect x="2" y="10" width="3" height="1" fill="#484848"/><rect x="10" y="10" width="1" height="1" fill="#484848"/><rect x="11" y="10" width="1" height="1" fill="#E8E8E8"/><rect x="12" y="10" width="3" height="1" fill="#484848"/><rect x="0" y="11" width="1" height="1" fill="#484848"/><rect x="1" y="11" width="1" height="1" fill="#E8E8E8"/><rect x="2" y="11" width="3" height="1" fill="#484848"/><rect x="10" y="11" width="1" height="1" fill="#484848"/><rect x="11" y="11" width="1" height="1" fill="#E8E8E8"/><rect x="12" y="11" width="3" height="1" fill="#484848"/><rect x="0" y="12" width="5" height="1" fill="#484848"/><rect x="10" y="12" width="5" height="1" fill="#484848"/></svg>
<svg style="left:323px;top:60px" width="12" height="12" viewBox="0 0 12 12" shape-rendering="crispEdges"><rect x="0" y="0" width="5" height="5" fill="#4848F8"/><rect x="7" y="0" width="5" height="5" fill="#FFFF40"/><rect x="0" y="7" width="5" height="5" fill="#48F848"/><rect x="7" y="7" width="5" height="5" fill="#FF4848"/></svg>
<svg style="left:353px;top:59px" width="10" height="14" viewBox="0 0 10 14" shape-rendering="crispEdges"><rect x="2" y="0" width="6" height="1" fill="#303040"/><rect x="1" y="1" width="1" height="1" fill="#303040"/><rect x="2" y="1" width="6" height="1" fill="#FFFF40"/><rect x="8" y="1" width="1" height="1" fill="#303040"/><rect x="0" y="2" width="1" height="1" fill="#303040"/><rect x="1" y="2" width="2" height="1" fill="#FFFF40"/><rect x="3" y="2" width="3" height="1" fill="#303040"/><rect x="6" y="2" width="3" height="1" fill="#FFFF40"/><rect x="9" y="2" width="1" height="1" fill="#303040"/><rect x="0" y="3" width="1" height="1" fill="#303040"/><rect x="1" y="3" width="1" height="1" fill="#FFFF40"/><rect x="2" y="3" width="2" height="1" fill="#303040"/><rect x="5" y="3" width="1" height="1" fill="#303040"/><rect x="6" y="3" width="3" height="1" fill="#FFFF40"/><rect x="9" y="3" width="1" height="1" fill="#303040"/><rect x="0" y="4" width="3" height="1" fill="#303040"/><rect x="5" y="4" width="1" height="1" fill="#303040"/><rect x="6" y="4" width="3" height="1" fill="#FFFF40"/><rect x="9" y="4" width="1" height="1" fill="#303040"/><rect x="4" y="5" width="1" height="1" fill="#303040"/><rect x="5" y="5" width="3" height="1" fill="#FFFF40"/><rect x="8" y="5" width="1" height="1" fill="#303040"/><rect x="3" y="6" width="1" height="1" fill="#303040"/><rect x="4" y="6" width="2" height="1" fill="#FFFF40"/><rect x="6" y="6" width="2" height="1" fill="#303040"/><rect x="3" y="7" width="1" height="1" fill="#303040"/><rect x="4" y="7" width="2" height="1" fill="#FFFF40"/><rect x="6" y="7" width="1" height="1" fill="#303040"/><rect x="3" y="8" width="1" height="1" fill="#303040"/><rect x="4" y="8" width="2" height="1" fill="#FFFF40"/><rect x="6" y="8" width="1" height="1" fill="#303040"/><rect x="3" y="9" width="4" height="1" fill="#303040"/><rect x="3" y="11" width="4" height="1" fill="#303040"/><rect x="3" y="12" width="1" height="1" fill="#303040"/><rect x="4" y="12" width="2" height="1" fill="#FFFF40"/><rect x="6" y="12" width="1" height="1" fill="#303040"/><rect x="3" y="13" width="4" height="1" fill="#303040"/></svg>
<svg style="left:373px;top:71px" width="5" height="3" viewBox="0 0 5 3" shape-rendering="crispEdges"><rect x="0" y="0" width="5" height="1" fill="#000"/><rect x="1" y="1" width="3" height="1" fill="#000"/><rect x="2" y="2" width="1" height="1" fill="#000"/></svg>
<div class="a" style="left:4px;top:80px;width:561px;height:623px;border-top:1px solid #ACA899;border-left:1px solid #ACA899;border-right:1px solid #fff;border-bottom:1px solid #fff;background:#fff"></div>
<div class="a" style="left:5px;top:81px;width:559px;height:621px;border-top:1px solid #716F64;border-left:1px solid #716F64;background:#fff"></div>
<div class="a" style="left:6px;top:82px;width:541px;height:20px;background:linear-gradient(#EBEADB 0,#EBEADB 16px,#E2DECD 16px,#E2DECD 17px,#D6D2C2 17px,#D6D2C2 18px,#CBC7B8 18px)"></div>
<div class="a" style="left:242px;top:85px;width:1px;height:13px;background:#C7C5B2"></div><div class="a" style="left:243px;top:85px;width:1px;height:13px;background:#fff"></div>
<div class="a" style="left:294px;top:85px;width:1px;height:13px;background:#C7C5B2"></div><div class="a" style="left:295px;top:85px;width:1px;height:13px;background:#fff"></div>
<div class="a" style="left:352px;top:85px;width:1px;height:13px;background:#C7C5B2"></div><div class="a" style="left:353px;top:85px;width:1px;height:13px;background:#fff"></div>
<div class="a" style="left:403px;top:85px;width:1px;height:13px;background:#C7C5B2"></div><div class="a" style="left:404px;top:85px;width:1px;height:13px;background:#fff"></div>
<div class="a" style="left:450px;top:85px;width:1px;height:13px;background:#C7C5B2"></div><div class="a" style="left:451px;top:85px;width:1px;height:13px;background:#fff"></div>
<div class="a" style="left:545px;top:85px;width:1px;height:13px;background:#C7C5B2"></div><div class="a" style="left:546px;top:85px;width:1px;height:13px;background:#fff"></div>
<div class="t" style="left:15px;top:86px">Item</div>
<div class="t" style="left:252px;top:86px">Device</div>
<div class="t" style="left:304px;top:86px">Endpoint</div>
<div class="t" style="left:362px;top:86px">Status</div>
<div class="t" style="left:413px;top:86px">Speed</div>
<div class="t" style="left:461px;top:86px">Time</div>
<div class="a" style="left:6px;top:102px;width:541px;height:20px;background:#fff"></div>
<div class="a" style="left:6px;top:122px;width:221px;height:1px;background:#000"></div>
<div class="t" style="left:11px;top:105px;color:#ACA899">Enter text here</div>
<div class="a" style="left:227px;top:102px;width:17px;height:21px;background:#ECE9D8;border-right:1px solid #716F64;border-bottom:1px solid #716F64;border-top:1px solid #fff;border-left:1px solid #fff;box-shadow:inset -1px -1px 0 #ACA899"></div>
<svg style="left:230px;top:107px" width="12" height="11" viewBox="0 0 12 11" ><path d="M0.5 0.5H11.5L7.5 5V10.5L4.5 9.5V5Z" fill="#F2F2F2" stroke="#404040" stroke-width="1" stroke-linejoin="bevel"/><path d="M2.5 2H9.5" stroke="#A0A0A0"/><path d="M5.5 5.5V9" stroke="#909090"/></svg>
<div class="a" style="left:244px;top:122px;width:36px;height:1px;background:#000"></div>
<div class="t" style="left:249px;top:105px;color:#ACA899">E…</div>
<div class="a" style="left:280px;top:102px;width:16px;height:21px;background:#ECE9D8;border-right:1px solid #716F64;border-bottom:1px solid #716F64;border-top:1px solid #fff;border-left:1px solid #fff;box-shadow:inset -1px -1px 0 #ACA899"></div>
<svg style="left:283px;top:107px" width="12" height="11" viewBox="0 0 12 11" ><path d="M0.5 0.5H11.5L7.5 5V10.5L4.5 9.5V5Z" fill="#F2F2F2" stroke="#404040" stroke-width="1" stroke-linejoin="bevel"/><path d="M2.5 2H9.5" stroke="#A0A0A0"/><path d="M5.5 5.5V9" stroke="#909090"/></svg>
<div class="a" style="left:296px;top:122px;width:42px;height:1px;background:#000"></div>
<div class="t" style="left:301px;top:105px;color:#ACA899">Ent…</div>
<div class="a" style="left:338px;top:102px;width:16px;height:21px;background:#ECE9D8;border-right:1px solid #716F64;border-bottom:1px solid #716F64;border-top:1px solid #fff;border-left:1px solid #fff;box-shadow:inset -1px -1px 0 #ACA899"></div>
<svg style="left:341px;top:107px" width="12" height="11" viewBox="0 0 12 11" ><path d="M0.5 0.5H11.5L7.5 5V10.5L4.5 9.5V5Z" fill="#F2F2F2" stroke="#404040" stroke-width="1" stroke-linejoin="bevel"/><path d="M2.5 2H9.5" stroke="#A0A0A0"/><path d="M5.5 5.5V9" stroke="#909090"/></svg>
<div class="a" style="left:354px;top:122px;width:35px;height:1px;background:#000"></div>
<div class="t" style="left:359px;top:105px;color:#ACA899">E…</div>
<div class="a" style="left:389px;top:102px;width:16px;height:21px;background:#ECE9D8;border-right:1px solid #716F64;border-bottom:1px solid #716F64;border-top:1px solid #fff;border-left:1px solid #fff;box-shadow:inset -1px -1px 0 #ACA899"></div>
<svg style="left:392px;top:107px" width="12" height="11" viewBox="0 0 12 11" ><path d="M0.5 0.5H11.5L7.5 5V10.5L4.5 9.5V5Z" fill="#F2F2F2" stroke="#404040" stroke-width="1" stroke-linejoin="bevel"/><path d="M2.5 2H9.5" stroke="#A0A0A0"/><path d="M5.5 5.5V9" stroke="#909090"/></svg>
<div class="a" style="left:405px;top:122px;width:31px;height:1px;background:#000"></div>
<div class="t" style="left:410px;top:105px;color:#ACA899">E…</div>
<div class="a" style="left:436px;top:102px;width:16px;height:21px;background:#ECE9D8;border-right:1px solid #716F64;border-bottom:1px solid #716F64;border-top:1px solid #fff;border-left:1px solid #fff;box-shadow:inset -1px -1px 0 #ACA899"></div>
<svg style="left:439px;top:107px" width="12" height="11" viewBox="0 0 12 11" ><path d="M0.5 0.5H11.5L7.5 5V10.5L4.5 9.5V5Z" fill="#F2F2F2" stroke="#404040" stroke-width="1" stroke-linejoin="bevel"/><path d="M2.5 2H9.5" stroke="#A0A0A0"/><path d="M5.5 5.5V9" stroke="#909090"/></svg>
<div class="a" style="left:452px;top:122px;width:79px;height:1px;background:#000"></div>
<div class="t" style="left:457px;top:105px;color:#ACA899">Enter text …</div>
<div class="a" style="left:531px;top:102px;width:16px;height:21px;background:#ECE9D8;border-right:1px solid #716F64;border-bottom:1px solid #716F64;border-top:1px solid #fff;border-left:1px solid #fff;box-shadow:inset -1px -1px 0 #ACA899"></div>
<svg style="left:534px;top:107px" width="12" height="11" viewBox="0 0 12 11" ><path d="M0.5 0.5H11.5L7.5 5V10.5L4.5 9.5V5Z" fill="#F2F2F2" stroke="#404040" stroke-width="1" stroke-linejoin="bevel"/><path d="M2.5 2H9.5" stroke="#A0A0A0"/><path d="M5.5 5.5V9" stroke="#909090"/></svg>
<div class="a" style="left:0;top:0;width:999px;height:701px;overflow:hidden">
<div class="a" style="left:6px;top:140px;width:541px;height:1px;background:#EBE8D8"></div>
<div class="t" style="left:45px;top:126px;color:#000;letter-spacing:-0.1px">SerialState</div>
<div class="t" style="left:250px;top:126px;color:#000;letter-spacing:0.1px">2</div>
<div class="t" style="left:301px;top:126px;color:#000;letter-spacing:0.1px">1</div>
<div class="t" style="left:360px;top:126px;color:#000;letter-spacing:0.1px">OK</div>
<div class="t" style="left:410px;top:126px;color:#000;letter-spacing:0.1px">FS</div>
<div class="t" style="left:457px;top:126px;color:#000;letter-spacing:0.1px">846.010 232 833</div>
<div class="a" style="left:10px;top:128px;width:9px;height:9px;border:1px solid #ACA899;background:#fff"></div><div class="a" style="left:12px;top:132px;width:5px;height:1px;background:#000"></div><div class="a" style="left:14px;top:130px;width:1px;height:5px;background:#000"></div>
<svg style="left:21px;top:123px" width="17" height="18"><use href="#is"/></svg>
<div class="a" style="left:6px;top:158px;width:541px;height:1px;background:#EBE8D8"></div>
<div class="t" style="left:45px;top:144px;color:#000;letter-spacing:-0.1px">GetDescriptor (String lang IDs)</div>
<div class="t" style="left:250px;top:144px;color:#000;letter-spacing:0.1px">2</div>
<div class="t" style="left:301px;top:144px;color:#000;letter-spacing:0.1px">0</div>
<div class="t" style="left:360px;top:144px;color:#000;letter-spacing:0.1px">OK</div>
<div class="t" style="left:410px;top:144px;color:#000;letter-spacing:0.1px">FS</div>
<div class="t" style="left:457px;top:144px;color:#000;letter-spacing:0.1px">865.288 783 966</div>
<div class="a" style="left:10px;top:146px;width:9px;height:9px;border:1px solid #ACA899;background:#fff"></div><div class="a" style="left:12px;top:150px;width:5px;height:1px;background:#000"></div><div class="a" style="left:14px;top:148px;width:1px;height:5px;background:#000"></div>
<svg style="left:21px;top:141px" width="17" height="18"><use href="#id"/></svg>
<div class="a" style="left:6px;top:176px;width:541px;height:1px;background:#EBE8D8"></div>
<div class="t" style="left:45px;top:162px;color:#000;letter-spacing:-0.1px">GetDescriptor (String iInterface)</div>
<div class="t" style="left:250px;top:162px;color:#000;letter-spacing:0.1px">2</div>
<div class="t" style="left:301px;top:162px;color:#000;letter-spacing:0.1px">0</div>
<div class="t" style="left:360px;top:162px;color:#000;letter-spacing:0.1px">OK</div>
<div class="t" style="left:410px;top:162px;color:#000;letter-spacing:0.1px">FS</div>
<div class="t" style="left:457px;top:162px;color:#000;letter-spacing:0.1px">865.289 405 416</div>
<div class="a" style="left:10px;top:164px;width:9px;height:9px;border:1px solid #ACA899;background:#fff"></div><div class="a" style="left:12px;top:168px;width:5px;height:1px;background:#000"></div><div class="a" style="left:14px;top:166px;width:1px;height:5px;background:#000"></div>
<svg style="left:21px;top:159px" width="17" height="18"><use href="#id"/></svg>
<div class="a" style="left:6px;top:194px;width:541px;height:1px;background:#EBE8D8"></div>
<div class="t" style="left:45px;top:180px;color:#000;letter-spacing:-0.1px">GetDescriptor (String lang IDs)</div>
<div class="t" style="left:250px;top:180px;color:#000;letter-spacing:0.1px">2</div>
<div class="t" style="left:301px;top:180px;color:#000;letter-spacing:0.1px">0</div>
<div class="t" style="left:360px;top:180px;color:#000;letter-spacing:0.1px">OK</div>
<div class="t" style="left:410px;top:180px;color:#000;letter-spacing:0.1px">FS</div>
<div class="t" style="left:457px;top:180px;color:#000;letter-spacing:0.1px">865.290 404 433</div>
<div class="a" style="left:10px;top:182px;width:9px;height:9px;border:1px solid #ACA899;background:#fff"></div><div class="a" style="left:12px;top:186px;width:5px;height:1px;background:#000"></div><div class="a" style="left:14px;top:184px;width:1px;height:5px;background:#000"></div>
<svg style="left:21px;top:177px" width="17" height="18"><use href="#id"/></svg>
<div class="a" style="left:6px;top:212px;width:541px;height:1px;background:#EBE8D8"></div>
<div class="t" style="left:45px;top:198px;color:#000;letter-spacing:-0.1px">GetDescriptor (String )</div>
<div class="t" style="left:250px;top:198px;color:#000;letter-spacing:0.1px">2</div>
<div class="t" style="left:301px;top:198px;color:#000;letter-spacing:0.1px">0</div>
<div class="t" style="left:360px;top:198px;color:#000;letter-spacing:0.1px">OK</div>
<div class="t" style="left:410px;top:198px;color:#000;letter-spacing:0.1px">FS</div>
<div class="t" style="left:457px;top:198px;color:#000;letter-spacing:0.1px">865.291 422 266</div>
<div class="a" style="left:10px;top:200px;width:9px;height:9px;border:1px solid #ACA899;background:#fff"></div><div class="a" style="left:12px;top:204px;width:5px;height:1px;background:#000"></div><div class="a" style="left:14px;top:202px;width:1px;height:5px;background:#000"></div>
<svg style="left:21px;top:195px" width="17" height="18"><use href="#id"/></svg>
<div class="a" style="left:6px;top:230px;width:541px;height:1px;background:#EBE8D8"></div>
<div class="t" style="left:45px;top:216px;color:#000;letter-spacing:-0.1px">GetCommFeature (Abstract state)</div>
<div class="t" style="left:250px;top:216px;color:#000;letter-spacing:0.1px">2</div>
<div class="t" style="left:301px;top:216px;color:#000;letter-spacing:0.1px">0</div>
<div class="t" style="left:360px;top:216px;color:#000;letter-spacing:0.1px">OK</div>
<div class="t" style="left:410px;top:216px;color:#000;letter-spacing:0.1px">FS</div>
<div class="t" style="left:457px;top:216px;color:#000;letter-spacing:0.1px">865.412 410 033</div>
<div class="a" style="left:10px;top:218px;width:9px;height:9px;border:1px solid #ACA899;background:#fff"></div><div class="a" style="left:12px;top:222px;width:5px;height:1px;background:#000"></div><div class="a" style="left:14px;top:220px;width:1px;height:5px;background:#000"></div>
<svg style="left:21px;top:213px" width="17" height="18"><use href="#ig"/></svg>
<div class="a" style="left:6px;top:248px;width:541px;height:1px;background:#EBE8D8"></div>
<div class="t" style="left:45px;top:234px;color:#000;letter-spacing:-0.1px">SetCommFeature (Abstract state)</div>
<div class="t" style="left:250px;top:234px;color:#000;letter-spacing:0.1px">2</div>
<div class="t" style="left:301px;top:234px;color:#000;letter-spacing:0.1px">0</div>
<div class="t" style="left:360px;top:234px;color:#000;letter-spacing:0.1px">OK</div>
<div class="t" style="left:410px;top:234px;color:#000;letter-spacing:0.1px">FS</div>
<div class="t" style="left:457px;top:234px;color:#000;letter-spacing:0.1px">865.413 395 199</div>
<div class="a" style="left:10px;top:236px;width:9px;height:9px;border:1px solid #ACA899;background:#fff"></div><div class="a" style="left:12px;top:240px;width:5px;height:1px;background:#000"></div><div class="a" style="left:14px;top:238px;width:1px;height:5px;background:#000"></div>
<svg style="left:21px;top:231px" width="17" height="18"><use href="#ip"/></svg>
<div class="a" style="left:6px;top:266px;width:541px;height:1px;background:#EBE8D8"></div>
<div class="t" style="left:45px;top:252px;color:#000;letter-spacing:-0.1px">GetCommFeature (Abstract state)</div>
<div class="t" style="left:250px;top:252px;color:#000;letter-spacing:0.1px">2</div>
<div class="t" style="left:301px;top:252px;color:#000;letter-spacing:0.1px">0</div>
<div class="t" style="left:360px;top:252px;color:#000;letter-spacing:0.1px">OK</div>
<div class="t" style="left:410px;top:252px;color:#000;letter-spacing:0.1px">FS</div>
<div class="t" style="left:457px;top:252px;color:#000;letter-spacing:0.1px">865.591 294 016</div>
<div class="a" style="left:10px;top:254px;width:9px;height:9px;border:1px solid #ACA899;background:#fff"></div><div class="a" style="left:12px;top:258px;width:5px;height:1px;background:#000"></div><div class="a" style="left:14px;top:256px;width:1px;height:5px;background:#000"></div>
<svg style="left:21px;top:249px" width="17" height="18"><use href="#ig"/></svg>
<div class="a" style="left:6px;top:284px;width:541px;height:1px;background:#EBE8D8"></div>
<div class="t" style="left:45px;top:270px;color:#000;letter-spacing:-0.1px">SetCommFeature (Abstract state)</div>
<div class="t" style="left:250px;top:270px;color:#000;letter-spacing:0.1px">2</div>
<div class="t" style="left:301px;top:270px;color:#000;letter-spacing:0.1px">0</div>
<div class="t" style="left:360px;top:270px;color:#000;letter-spacing:0.1px">OK</div>
<div class="t" style="left:410px;top:270px;color:#000;letter-spacing:0.1px">FS</div>
<div class="t" style="left:457px;top:270px;color:#000;letter-spacing:0.1px">865.592 350 683</div>
<div class="a" style="left:10px;top:272px;width:9px;height:9px;border:1px solid #ACA899;background:#fff"></div><div class="a" style="left:12px;top:276px;width:5px;height:1px;background:#000"></div><div class="a" style="left:14px;top:274px;width:1px;height:5px;background:#000"></div>
<svg style="left:21px;top:267px" width="17" height="18"><use href="#ip"/></svg>
<div class="a" style="left:6px;top:302px;width:541px;height:1px;background:#EBE8D8"></div>
<div class="t" style="left:45px;top:288px;color:#000;letter-spacing:-0.1px">SetControlLineState (Activate carrier…</div>
<div class="t" style="left:250px;top:288px;color:#000;letter-spacing:0.1px">2</div>
<div class="t" style="left:301px;top:288px;color:#000;letter-spacing:0.1px">0</div>
<div class="t" style="left:360px;top:288px;color:#000;letter-spacing:0.1px">OK</div>
<div class="t" style="left:410px;top:288px;color:#000;letter-spacing:0.1px">FS</div>
<div class="t" style="left:457px;top:288px;color:#000;letter-spacing:0.1px">865.594 372 883</div>
<div class="a" style="left:10px;top:290px;width:9px;height:9px;border:1px solid #ACA899;background:#fff"></div><div class="a" style="left:12px;top:294px;width:5px;height:1px;background:#000"></div><div class="a" style="left:14px;top:292px;width:1px;height:5px;background:#000"></div>
<svg style="left:21px;top:285px" width="17" height="18"><use href="#ip"/></svg>
<div class="a" style="left:6px;top:320px;width:541px;height:1px;background:#EBE8D8"></div>
<div class="t" style="left:45px;top:306px;color:#000;letter-spacing:-0.1px">SerialState</div>
<div class="t" style="left:250px;top:306px;color:#000;letter-spacing:0.1px">2</div>
<div class="t" style="left:301px;top:306px;color:#000;letter-spacing:0.1px">3</div>
<div class="t" style="left:360px;top:306px;color:#000;letter-spacing:0.1px">OK</div>
<div class="t" style="left:410px;top:306px;color:#000;letter-spacing:0.1px">FS</div>
<div class="t" style="left:457px;top:306px;color:#000;letter-spacing:0.1px">865.614 299 233</div>
<div class="a" style="left:10px;top:308px;width:9px;height:9px;border:1px solid #ACA899;background:#fff"></div><div class="a" style="left:12px;top:312px;width:5px;height:1px;background:#000"></div><div class="a" style="left:14px;top:310px;width:1px;height:5px;background:#000"></div>
<svg style="left:21px;top:303px" width="17" height="18"><use href="#is"/></svg>
<div class="a" style="left:6px;top:338px;width:541px;height:1px;background:#EBE8D8"></div>
<div class="t" style="left:45px;top:324px;color:#000;letter-spacing:-0.1px">SetControlLineState (Deactivate carri…</div>
<div class="t" style="left:250px;top:324px;color:#000;letter-spacing:0.1px">2</div>
<div class="t" style="left:301px;top:324px;color:#000;letter-spacing:0.1px">0</div>
<div class="t" style="left:360px;top:324px;color:#000;letter-spacing:0.1px">OK</div>
<div class="t" style="left:410px;top:324px;color:#000;letter-spacing:0.1px">FS</div>
<div class="t" style="left:457px;top:324px;color:#000;letter-spacing:0.1px">865.895 676 900</div>
<div class="a" style="left:10px;top:326px;width:9px;height:9px;border:1px solid #ACA899;background:#fff"></div><div class="a" style="left:12px;top:330px;width:5px;height:1px;background:#000"></div><div class="a" style="left:14px;top:328px;width:1px;height:5px;background:#000"></div>
<svg style="left:21px;top:321px" width="17" height="18"><use href="#ip"/></svg>
<div class="a" style="left:6px;top:339px;width:541px;height:17px;background:#316AC5"></div>
<div class="a" style="left:6px;top:356px;width:541px;height:1px;background:#EBE8D8"></div>
<div class="t" style="left:45px;top:342px;color:#fff;letter-spacing:-0.1px">GetCommFeature (Abstract state)</div>
<div class="t" style="left:250px;top:342px;color:#fff;letter-spacing:0.1px">2</div>
<div class="t" style="left:301px;top:342px;color:#fff;letter-spacing:0.1px">0</div>
<div class="t" style="left:360px;top:342px;color:#fff;letter-spacing:0.1px">OK</div>
<div class="t" style="left:410px;top:342px;color:#fff;letter-spacing:0.1px">FS</div>
<div class="t" style="left:457px;top:342px;color:#fff;letter-spacing:0.1px">865.897 031 933</div>
<div class="a" style="left:10px;top:344px;width:9px;height:9px;border:1px solid #ACA899;background:#fff"></div><div class="a" style="left:12px;top:348px;width:5px;height:1px;background:#000"></div><div class="a" style="left:14px;top:346px;width:1px;height:5px;background:#000"></div>
<svg style="left:21px;top:339px" width="17" height="18"><use href="#ig"/></svg>
<div class="a" style="left:6px;top:374px;width:541px;height:1px;background:#EBE8D8"></div>
<div class="t" style="left:45px;top:360px;color:#000;letter-spacing:-0.1px">SetCommFeature (Abstract state)</div>
<div class="t" style="left:250px;top:360px;color:#000;letter-spacing:0.1px">2</div>
<div class="t" style="left:301px;top:360px;color:#000;letter-spacing:0.1px">0</div>
<div class="t" style="left:360px;top:360px;color:#000;letter-spacing:0.1px">OK</div>
<div class="t" style="left:410px;top:360px;color:#000;letter-spacing:0.1px">FS</div>
<div class="t" style="left:457px;top:360px;color:#000;letter-spacing:0.1px">865.898 034 250</div>
<div class="a" style="left:10px;top:362px;width:9px;height:9px;border:1px solid #ACA899;background:#fff"></div><div class="a" style="left:12px;top:366px;width:5px;height:1px;background:#000"></div><div class="a" style="left:14px;top:364px;width:1px;height:5px;background:#000"></div>
<svg style="left:21px;top:357px" width="17" height="18"><use href="#ip"/></svg>
<div class="a" style="left:6px;top:392px;width:541px;height:1px;background:#EBE8D8"></div>
<div class="t" style="left:45px;top:378px;color:#000;letter-spacing:-0.1px">SerialState</div>
<div class="t" style="left:250px;top:378px;color:#000;letter-spacing:0.1px">2</div>
<div class="t" style="left:301px;top:378px;color:#000;letter-spacing:0.1px">3</div>
<div class="t" style="left:360px;top:378px;color:#000;letter-spacing:0.1px">OK</div>
<div class="t" style="left:410px;top:378px;color:#000;letter-spacing:0.1px">FS</div>
<div class="t" style="left:457px;top:378px;color:#000;letter-spacing:0.1px">865.901 994 400</div>
<div class="a" style="left:10px;top:380px;width:9px;height:9px;border:1px solid #ACA899;background:#fff"></div><div class="a" style="left:12px;top:384px;width:5px;height:1px;background:#000"></div><div class="a" style="left:14px;top:382px;width:1px;height:5px;background:#000"></div>
<svg style="left:21px;top:375px" width="17" height="18"><use href="#is"/></svg>
<div class="a" style="left:6px;top:410px;width:541px;height:1px;background:#EBE8D8"></div>
<div class="t" style="left:45px;top:396px;color:#000;letter-spacing:-0.1px">GetDescriptor (String lang IDs)</div>
<div class="t" style="left:250px;top:396px;color:#000;letter-spacing:0.1px">2</div>
<div class="t" style="left:301px;top:396px;color:#000;letter-spacing:0.1px">0</div>
<div class="t" style="left:360px;top:396px;color:#000;letter-spacing:0.1px">OK</div>
<div class="t" style="left:410px;top:396px;color:#000;letter-spacing:0.1px">FS</div>
<div class="t" style="left:457px;top:396px;color:#000;letter-spacing:0.1px">876.910 558 850</div>
<div class="a" style="left:10px;top:398px;width:9px;height:9px;border:1px solid #ACA899;background:#fff"></div><div class="a" style="left:12px;top:402px;width:5px;height:1px;background:#000"></div><div class="a" style="left:14px;top:400px;width:1px;height:5px;background:#000"></div>
<svg style="left:21px;top:393px" width="17" height="18"><use href="#id"/></svg>
<div class="a" style="left:6px;top:428px;width:541px;height:1px;background:#EBE8D8"></div>
<div class="t" style="left:45px;top:414px;color:#000;letter-spacing:-0.1px">GetDescriptor (String iInterface)</div>
<div class="t" style="left:250px;top:414px;color:#000;letter-spacing:0.1px">2</div>
<div class="t" style="left:301px;top:414px;color:#000;letter-spacing:0.1px">0</div>
<div class="t" style="left:360px;top:414px;color:#000;letter-spacing:0.1px">OK</div>
<div class="t" style="left:410px;top:414px;color:#000;letter-spacing:0.1px">FS</div>
<div class="t" style="left:457px;top:414px;color:#000;letter-spacing:0.1px">876.911 804 033</div>
<div class="a" style="left:10px;top:416px;width:9px;height:9px;border:1px solid #ACA899;background:#fff"></div><div class="a" style="left:12px;top:420px;width:5px;height:1px;background:#000"></div><div class="a" style="left:14px;top:418px;width:1px;height:5px;background:#000"></div>
<svg style="left:21px;top:411px" width="17" height="18"><use href="#id"/></svg>
<div class="a" style="left:6px;top:446px;width:541px;height:1px;background:#EBE8D8"></div>
<div class="t" style="left:45px;top:432px;color:#000;letter-spacing:-0.1px">GetDescriptor (String lang IDs)</div>
<div class="t" style="left:250px;top:432px;color:#000;letter-spacing:0.1px">2</div>
<div class="t" style="left:301px;top:432px;color:#000;letter-spacing:0.1px">0</div>
<div class="t" style="left:360px;top:432px;color:#000;letter-spacing:0.1px">OK</div>
<div class="t" style="left:410px;top:432px;color:#000;letter-spacing:0.1px">FS</div>
<div class="t" style="left:457px;top:432px;color:#000;letter-spacing:0.1px">876.912 793 833</div>
<div class="a" style="left:10px;top:434px;width:9px;height:9px;border:1px solid #ACA899;background:#fff"></div><div class="a" style="left:12px;top:438px;width:5px;height:1px;background:#000"></div><div class="a" style="left:14px;top:436px;width:1px;height:5px;background:#000"></div>
<svg style="left:21px;top:429px" width="17" height="18"><use href="#id"/></svg>
<div class="a" style="left:6px;top:464px;width:541px;height:1px;background:#EBE8D8"></div>
<div class="t" style="left:45px;top:450px;color:#000;letter-spacing:-0.1px">GetDescriptor (String )</div>
<div class="t" style="left:250px;top:450px;color:#000;letter-spacing:0.1px">2</div>
<div class="t" style="left:301px;top:450px;color:#000;letter-spacing:0.1px">0</div>
<div class="t" style="left:360px;top:450px;color:#000;letter-spacing:0.1px">OK</div>
<div class="t" style="left:410px;top:450px;color:#000;letter-spacing:0.1px">FS</div>
<div class="t" style="left:457px;top:450px;color:#000;letter-spacing:0.1px">876.913 789 866</div>
<div class="a" style="left:10px;top:452px;width:9px;height:9px;border:1px solid #ACA899;background:#fff"></div><div class="a" style="left:12px;top:456px;width:5px;height:1px;background:#000"></div><div class="a" style="left:14px;top:454px;width:1px;height:5px;background:#000"></div>
<svg style="left:21px;top:447px" width="17" height="18"><use href="#id"/></svg>
<div class="a" style="left:6px;top:482px;width:541px;height:1px;background:#EBE8D8"></div>
<div class="t" style="left:45px;top:468px;color:#000;letter-spacing:-0.1px">GetDescriptor (String lang IDs)</div>
<div class="t" style="left:250px;top:468px;color:#000;letter-spacing:0.1px">2</div>
<div class="t" style="left:301px;top:468px;color:#000;letter-spacing:0.1px">0</div>
<div class="t" style="left:360px;top:468px;color:#000;letter-spacing:0.1px">OK</div>
<div class="t" style="left:410px;top:468px;color:#000;letter-spacing:0.1px">FS</div>
<div class="t" style="left:457px;top:468px;color:#000;letter-spacing:0.1px">889.241 048 466</div>
<div class="a" style="left:10px;top:470px;width:9px;height:9px;border:1px solid #ACA899;background:#fff"></div><div class="a" style="left:12px;top:474px;width:5px;height:1px;background:#000"></div><div class="a" style="left:14px;top:472px;width:1px;height:5px;background:#000"></div>
<svg style="left:21px;top:465px" width="17" height="18"><use href="#id"/></svg>
<div class="a" style="left:6px;top:500px;width:541px;height:1px;background:#EBE8D8"></div>
<div class="t" style="left:45px;top:486px;color:#000;letter-spacing:-0.1px">GetDescriptor (String iInterface)</div>
<div class="t" style="left:250px;top:486px;color:#000;letter-spacing:0.1px">2</div>
<div class="t" style="left:301px;top:486px;color:#000;letter-spacing:0.1px">0</div>
<div class="t" style="left:360px;top:486px;color:#000;letter-spacing:0.1px">OK</div>
<div class="t" style="left:410px;top:486px;color:#000;letter-spacing:0.1px">FS</div>
<div class="t" style="left:457px;top:486px;color:#000;letter-spacing:0.1px">889.242 334 600</div>
<div class="a" style="left:10px;top:488px;width:9px;height:9px;border:1px solid #ACA899;background:#fff"></div><div class="a" style="left:12px;top:492px;width:5px;height:1px;background:#000"></div><div class="a" style="left:14px;top:490px;width:1px;height:5px;background:#000"></div>
<svg style="left:21px;top:483px" width="17" height="18"><use href="#id"/></svg>
<div class="a" style="left:6px;top:518px;width:541px;height:1px;background:#EBE8D8"></div>
<div class="t" style="left:45px;top:504px;color:#000;letter-spacing:-0.1px">GetDescriptor (String lang IDs)</div>
<div class="t" style="left:250px;top:504px;color:#000;letter-spacing:0.1px">2</div>
<div class="t" style="left:301px;top:504px;color:#000;letter-spacing:0.1px">0</div>
<div class="t" style="left:360px;top:504px;color:#000;letter-spacing:0.1px">OK</div>
<div class="t" style="left:410px;top:504px;color:#000;letter-spacing:0.1px">FS</div>
<div class="t" style="left:457px;top:504px;color:#000;letter-spacing:0.1px">889.243 327 816</div>
<div class="a" style="left:10px;top:506px;width:9px;height:9px;border:1px solid #ACA899;background:#fff"></div><div class="a" style="left:12px;top:510px;width:5px;height:1px;background:#000"></div><div class="a" style="left:14px;top:508px;width:1px;height:5px;background:#000"></div>
<svg style="left:21px;top:501px" width="17" height="18"><use href="#id"/></svg>
<div class="a" style="left:6px;top:536px;width:541px;height:1px;background:#EBE8D8"></div>
<div class="t" style="left:45px;top:522px;color:#000;letter-spacing:-0.1px">GetDescriptor (String )</div>
<div class="t" style="left:250px;top:522px;color:#000;letter-spacing:0.1px">2</div>
<div class="t" style="left:301px;top:522px;color:#000;letter-spacing:0.1px">0</div>
<div class="t" style="left:360px;top:522px;color:#000;letter-spacing:0.1px">OK</div>
<div class="t" style="left:410px;top:522px;color:#000;letter-spacing:0.1px">FS</div>
<div class="t" style="left:457px;top:522px;color:#000;letter-spacing:0.1px">889.244 300 816</div>
<div class="a" style="left:10px;top:524px;width:9px;height:9px;border:1px solid #ACA899;background:#fff"></div><div class="a" style="left:12px;top:528px;width:5px;height:1px;background:#000"></div><div class="a" style="left:14px;top:526px;width:1px;height:5px;background:#000"></div>
<svg style="left:21px;top:519px" width="17" height="18"><use href="#id"/></svg>
<div class="a" style="left:6px;top:554px;width:541px;height:1px;background:#EBE8D8"></div>
<div class="t" style="left:45px;top:540px;color:#000;letter-spacing:-0.1px">GetCommFeature (Abstract state)</div>
<div class="t" style="left:250px;top:540px;color:#000;letter-spacing:0.1px">2</div>
<div class="t" style="left:301px;top:540px;color:#000;letter-spacing:0.1px">0</div>
<div class="t" style="left:360px;top:540px;color:#000;letter-spacing:0.1px">OK</div>
<div class="t" style="left:410px;top:540px;color:#000;letter-spacing:0.1px">FS</div>
<div class="t" style="left:457px;top:540px;color:#000;letter-spacing:0.1px">889.302 402 450</div>
<div class="a" style="left:10px;top:542px;width:9px;height:9px;border:1px solid #ACA899;background:#fff"></div><div class="a" style="left:12px;top:546px;width:5px;height:1px;background:#000"></div><div class="a" style="left:14px;top:544px;width:1px;height:5px;background:#000"></div>
<svg style="left:21px;top:537px" width="17" height="18"><use href="#ig"/></svg>
<div class="a" style="left:6px;top:572px;width:541px;height:1px;background:#EBE8D8"></div>
<div class="t" style="left:45px;top:558px;color:#000;letter-spacing:-0.1px">SetCommFeature (Abstract state)</div>
<div class="t" style="left:250px;top:558px;color:#000;letter-spacing:0.1px">2</div>
<div class="t" style="left:301px;top:558px;color:#000;letter-spacing:0.1px">0</div>
<div class="t" style="left:360px;top:558px;color:#000;letter-spacing:0.1px">OK</div>
<div class="t" style="left:410px;top:558px;color:#000;letter-spacing:0.1px">FS</div>
<div class="t" style="left:457px;top:558px;color:#000;letter-spacing:0.1px">889.303 287 383</div>
<div class="a" style="left:10px;top:560px;width:9px;height:9px;border:1px solid #ACA899;background:#fff"></div><div class="a" style="left:12px;top:564px;width:5px;height:1px;background:#000"></div><div class="a" style="left:14px;top:562px;width:1px;height:5px;background:#000"></div>
<svg style="left:21px;top:555px" width="17" height="18"><use href="#ip"/></svg>
<div class="a" style="left:6px;top:590px;width:541px;height:1px;background:#EBE8D8"></div>
<div class="t" style="left:45px;top:576px;color:#000;letter-spacing:-0.1px">GetDescriptor (String lang IDs)</div>
<div class="t" style="left:250px;top:576px;color:#000;letter-spacing:0.1px">2</div>
<div class="t" style="left:301px;top:576px;color:#000;letter-spacing:0.1px">0</div>
<div class="t" style="left:360px;top:576px;color:#000;letter-spacing:0.1px">OK</div>
<div class="t" style="left:410px;top:576px;color:#000;letter-spacing:0.1px">FS</div>
<div class="t" style="left:457px;top:576px;color:#000;letter-spacing:0.1px">893.843 851 116</div>
<div class="a" style="left:10px;top:578px;width:9px;height:9px;border:1px solid #ACA899;background:#fff"></div><div class="a" style="left:12px;top:582px;width:5px;height:1px;background:#000"></div><div class="a" style="left:14px;top:580px;width:1px;height:5px;background:#000"></div>
<svg style="left:21px;top:573px" width="17" height="18"><use href="#id"/></svg>
<div class="a" style="left:6px;top:608px;width:541px;height:1px;background:#EBE8D8"></div>
<div class="t" style="left:45px;top:594px;color:#000;letter-spacing:-0.1px">GetDescriptor (String iInterface)</div>
<div class="t" style="left:250px;top:594px;color:#000;letter-spacing:0.1px">2</div>
<div class="t" style="left:301px;top:594px;color:#000;letter-spacing:0.1px">0</div>
<div class="t" style="left:360px;top:594px;color:#000;letter-spacing:0.1px">OK</div>
<div class="t" style="left:410px;top:594px;color:#000;letter-spacing:0.1px">FS</div>
<div class="t" style="left:457px;top:594px;color:#000;letter-spacing:0.1px">893.844 381 999</div>
<div class="a" style="left:10px;top:596px;width:9px;height:9px;border:1px solid #ACA899;background:#fff"></div><div class="a" style="left:12px;top:600px;width:5px;height:1px;background:#000"></div><div class="a" style="left:14px;top:598px;width:1px;height:5px;background:#000"></div>
<svg style="left:21px;top:591px" width="17" height="18"><use href="#id"/></svg>
<div class="a" style="left:6px;top:626px;width:541px;height:1px;background:#EBE8D8"></div>
<div class="t" style="left:45px;top:612px;color:#000;letter-spacing:-0.1px">GetDescriptor (String lang IDs)</div>
<div class="t" style="left:250px;top:612px;color:#000;letter-spacing:0.1px">2</div>
<div class="t" style="left:301px;top:612px;color:#000;letter-spacing:0.1px">0</div>
<div class="t" style="left:360px;top:612px;color:#000;letter-spacing:0.1px">OK</div>
<div class="t" style="left:410px;top:612px;color:#000;letter-spacing:0.1px">FS</div>
<div class="t" style="left:457px;top:612px;color:#000;letter-spacing:0.1px">893.845 370 399</div>
<div class="a" style="left:10px;top:614px;width:9px;height:9px;border:1px solid #ACA899;background:#fff"></div><div class="a" style="left:12px;top:618px;width:5px;height:1px;background:#000"></div><div class="a" style="left:14px;top:616px;width:1px;height:5px;background:#000"></div>
<svg style="left:21px;top:609px" width="17" height="18"><use href="#id"/></svg>
<div class="a" style="left:6px;top:644px;width:541px;height:1px;background:#EBE8D8"></div>
<div class="t" style="left:45px;top:630px;color:#000;letter-spacing:-0.1px">GetDescriptor (String )</div>
<div class="t" style="left:250px;top:630px;color:#000;letter-spacing:0.1px">2</div>
<div class="t" style="left:301px;top:630px;color:#000;letter-spacing:0.1px">0</div>
<div class="t" style="left:360px;top:630px;color:#000;letter-spacing:0.1px">OK</div>
<div class="t" style="left:410px;top:630px;color:#000;letter-spacing:0.1px">FS</div>
<div class="t" style="left:457px;top:630px;color:#000;letter-spacing:0.1px">893.846 380 516</div>
<div class="a" style="left:10px;top:632px;width:9px;height:9px;border:1px solid #ACA899;background:#fff"></div><div class="a" style="left:12px;top:636px;width:5px;height:1px;background:#000"></div><div class="a" style="left:14px;top:634px;width:1px;height:5px;background:#000"></div>
<svg style="left:21px;top:627px" width="17" height="18"><use href="#id"/></svg>
<div class="a" style="left:6px;top:662px;width:541px;height:1px;background:#EBE8D8"></div>
<div class="t" style="left:45px;top:648px;color:#000;letter-spacing:-0.1px">GetDescriptor (String lang IDs)</div>
<div class="t" style="left:250px;top:648px;color:#000;letter-spacing:0.1px">2</div>
<div class="t" style="left:301px;top:648px;color:#000;letter-spacing:0.1px">0</div>
<div class="t" style="left:360px;top:648px;color:#000;letter-spacing:0.1px">OK</div>
<div class="t" style="left:410px;top:648px;color:#000;letter-spacing:0.1px">FS</div>
<div class="t" style="left:457px;top:648px;color:#000;letter-spacing:0.1px">893.849 053 600</div>
<div class="a" style="left:10px;top:650px;width:9px;height:9px;border:1px solid #ACA899;background:#fff"></div><div class="a" style="left:12px;top:654px;width:5px;height:1px;background:#000"></div><div class="a" style="left:14px;top:652px;width:1px;height:5px;background:#000"></div>
<svg style="left:21px;top:645px" width="17" height="18"><use href="#id"/></svg>
<div class="a" style="left:6px;top:680px;width:541px;height:1px;background:#EBE8D8"></div>
<div class="t" style="left:45px;top:666px;color:#000;letter-spacing:-0.1px">GetDescriptor (String lang IDs)</div>
<div class="t" style="left:250px;top:666px;color:#000;letter-spacing:0.1px">2</div>
<div class="t" style="left:301px;top:666px;color:#000;letter-spacing:0.1px">0</div>
<div class="t" style="left:360px;top:666px;color:#000;letter-spacing:0.1px">OK</div>
<div class="t" style="left:410px;top:666px;color:#000;letter-spacing:0.1px">FS</div>
<div class="t" style="left:457px;top:666px;color:#000;letter-spacing:0.1px">893.850 419 050</div>
<div class="a" style="left:10px;top:668px;width:9px;height:9px;border:1px solid #ACA899;background:#fff"></div><div class="a" style="left:12px;top:672px;width:5px;height:1px;background:#000"></div><div class="a" style="left:14px;top:670px;width:1px;height:5px;background:#000"></div>
<svg style="left:21px;top:663px" width="17" height="18"><use href="#id"/></svg>
<div class="a" style="left:6px;top:698px;width:541px;height:1px;background:#EBE8D8"></div>
<div class="t" style="left:45px;top:684px;color:#000;letter-spacing:-0.1px">GetDescriptor (String )</div>
<div class="t" style="left:250px;top:684px;color:#000;letter-spacing:0.1px">2</div>
<div class="t" style="left:301px;top:684px;color:#000;letter-spacing:0.1px">0</div>
<div class="t" style="left:360px;top:684px;color:#000;letter-spacing:0.1px">OK</div>
<div class="t" style="left:410px;top:684px;color:#000;letter-spacing:0.1px">FS</div>
<div class="t" style="left:457px;top:684px;color:#000;letter-spacing:0.1px">893.851 371 050</div>
<div class="a" style="left:10px;top:686px;width:9px;height:9px;border:1px solid #ACA899;background:#fff"></div><div class="a" style="left:12px;top:690px;width:5px;height:1px;background:#000"></div><div class="a" style="left:14px;top:688px;width:1px;height:5px;background:#000"></div>
<svg style="left:21px;top:681px" width="17" height="18"><use href="#id"/></svg>
<div class="a" style="left:6px;top:716px;width:541px;height:1px;background:#EBE8D8"></div>
<div class="a" style="left:10px;top:704px;width:9px;height:9px;border:1px solid #ACA899;background:#fff"></div><div class="a" style="left:12px;top:708px;width:5px;height:1px;background:#000"></div><div class="a" style="left:14px;top:706px;width:1px;height:5px;background:#000"></div>
<svg style="left:21px;top:699px" width="17" height="18"><use href="#id"/></svg>
<div class="a" style="left:244px;top:123px;width:1px;height:579px;background:#EBE8D8"></div>
<div class="a" style="left:296px;top:123px;width:1px;height:579px;background:#EBE8D8"></div>
<div class="a" style="left:354px;top:123px;width:1px;height:579px;background:#EBE8D8"></div>
<div class="a" style="left:405px;top:123px;width:1px;height:579px;background:#EBE8D8"></div>
<div class="a" style="left:452px;top:123px;width:1px;height:579px;background:#EBE8D8"></div>
</div>
<div class="a" style="left:547px;top:82px;width:17px;height:620px;background:linear-gradient(90deg,#F3F1EC,#FEFEFB 60%,#F9F8F3)"></div>
<div class="a" style="left:548px;top:83px;width:15px;height:16px;border:1px solid #B5C8F4;border-radius:2px;background:linear-gradient(135deg,#D6E3FE,#BFD2FB 60%,#ADC5F7)"><svg style="left:-1px;top:1px" width="15" height="11" viewBox="0 0 15 11"><path d="M3.5 7.5L7.5 3.5L11.5 7.5" fill="none" stroke="#4D6185" stroke-width="2.2"/></svg></div>
<div class="a" style="left:548px;top:685px;width:15px;height:16px;border:1px solid #B5C8F4;border-radius:2px;background:linear-gradient(135deg,#D6E3FE,#BFD2FB 60%,#ADC5F7)"><svg style="left:-1px;top:1px" width="15" height="11" viewBox="0 0 15 11"><path d="M3.5 3.5L7.5 7.5L11.5 3.5" fill="none" stroke="#4D6185" stroke-width="2.2"/></svg></div>
<div class="a" style="left:549px;top:427px;width:14px;height:249px;border:1px solid #fff;border-right-color:#A8BEF0;border-radius:2px;background:linear-gradient(90deg,#CBD9FC,#BCD0FB 50%,#B2C8F8)"></div>
<div class="a" style="left:552px;top:547px;width:6px;height:1px;background:#F4F8FF"></div><div class="a" style="left:553px;top:548px;width:6px;height:1px;background:#8CB0F8"></div>
<div class="a" style="left:552px;top:549px;width:6px;height:1px;background:#F4F8FF"></div><div class="a" style="left:553px;top:550px;width:6px;height:1px;background:#8CB0F8"></div>
<div class="a" style="left:552px;top:551px;width:6px;height:1px;background:#F4F8FF"></div><div class="a" style="left:553px;top:552px;width:6px;height:1px;background:#8CB0F8"></div>
<div class="a" style="left:552px;top:553px;width:6px;height:1px;background:#F4F8FF"></div><div class="a" style="left:553px;top:554px;width:6px;height:1px;background:#8CB0F8"></div>
<div class="a" style="left:570px;top:82px;width:425px;height:16px;border:1px solid #C5C2B0;border-bottom-color:#A9A592;border-radius:2px;background:#ECE9D8"></div>
<div class="t" style="left:574px;top:85px;font-weight:bold;letter-spacing:0.3px">Details</div>
<svg style="left:967px;top:86px" width="9" height="10" viewBox="0 0 9 10" shape-rendering="crispEdges"><rect x="2" y="0" width="5" height="1" fill="#000"/><rect x="2" y="0" width="2" height="6" fill="#000"/><rect x="6" y="0" width="1" height="6" fill="#000"/><rect x="0" y="6" width="9" height="1" fill="#000"/><rect x="4" y="7" width="1" height="3" fill="#000"/></svg>
<svg style="left:982px;top:87px" width="8" height="8" viewBox="0 0 8 8" ><path d="M0.5 0.5L7.5 7.5M7.5 0.5L0.5 7.5" stroke="#000" stroke-width="0.9"/></svg>
<div class="a" style="left:570px;top:100px;width:425px;height:401px;border-top:1px solid #ACA899;border-left:1px solid #ACA899;background:#fff"></div>
<div class="a" style="left:571px;top:101px;width:424px;height:400px;border-top:1px solid #716F64;border-left:1px solid #716F64;background:#fff"></div>
<div class="a" style="left:976px;top:102px;width:17px;height:398px;background:linear-gradient(90deg,#F3F1EC,#FEFEFB 60%,#F9F8F3)"></div>
<div class="a" style="left:977px;top:103px;width:15px;height:16px;border:1px solid #E6E5DF;border-radius:2px;background:linear-gradient(#F4F4F0,#E8E8E2)"><svg style="left:-1px;top:1px" width="15" height="11" viewBox="0 0 15 11"><path d="M3.5 7.5L7.5 3.5L11.5 7.5" fill="none" stroke="#C9C8C2" stroke-width="2.2"/></svg></div>
<div class="a" style="left:977px;top:484px;width:15px;height:16px;border:1px solid #E6E5DF;border-radius:2px;background:linear-gradient(#F4F4F0,#E8E8E2)"><svg style="left:-1px;top:1px" width="15" height="11" viewBox="0 0 15 11"><path d="M3.5 3.5L7.5 7.5L11.5 3.5" fill="none" stroke="#C9C8C2" stroke-width="2.2"/></svg></div>
<div class="t" style="left:583px;top:117px;font-size:15px;line-height:17px;color:#3163CE;letter-spacing:0.9px;transform:scaleX(1.12);transform-origin:0 0">GetCommFeature (Abstract state)</div>
<div class="a" style="left:582px;top:135px;width:384px;height:1px;background:#3163CE"></div>
<div class="a" style="left:582px;top:155px;width:384px;height:73px;background:#003399"></div>
<div class="a" style="left:583px;top:180px;width:181px;height:23px;background:#FFFBD0"></div>
<div class="a" style="left:765px;top:180px;width:200px;height:23px;background:#FFFBD0"></div>
<div class="a" style="left:583px;top:204px;width:181px;height:23px;background:#D4E4FA"></div>
<div class="a" style="left:765px;top:204px;width:200px;height:23px;background:#D4E4FA"></div>
<div class="t" style="left:608px;top:162px;color:#fff;font-weight:bold;letter-spacing:0.82px;transform:scaleX(1.08);transform-origin:0 0;">Abstract State</div>
<div class="t" style="left:608px;top:186px;letter-spacing:0.4px;transform:scaleX(1.08);transform-origin:0 0;">Idle Setting</div>
<div class="t" style="left:768px;top:186px;letter-spacing:0.4px;transform:scaleX(1.08);transform-origin:0 0;">Accept/offer data</div>
<div class="t" style="left:608px;top:210px;letter-spacing:0.4px;transform:scaleX(1.08);transform-origin:0 0;">Data Multiplexing State</div>
<div class="t" style="left:768px;top:210px;letter-spacing:0.4px;transform:scaleX(1.08);transform-origin:0 0;">Enabled</div>
<svg style="left:928px;top:163px" width="8" height="10" viewBox="0 0 8 10" ><path d="M0.8 0.8L3.8 3.8L6.8 0.8M0.8 4.8L3.8 7.8L6.8 4.8" fill="none" stroke="#fff" stroke-width="1.5"/></svg>
<svg style="left:947px;top:164px" width="10" height="8" viewBox="0 0 10 8" ><path d="M0.8 0.8L3.8 3.8L0.8 6.8M4.8 0.8L7.8 3.8L4.8 6.8" fill="none" stroke="#fff" stroke-width="1.5"/></svg>
<div class="a" style="left:570px;top:503px;width:425px;height:1px;background:#000"></div>
<div class="a" style="left:570px;top:504px;width:425px;height:21px;background:#FCF9EA"></div>
<div class="a" style="left:574px;top:503px;width:60px;height:20px;background:#ECE9D8;border-left:1px solid #fff;border-right:1px solid #000;border-bottom:1px solid #000"></div>
<div class="t" style="left:597px;top:507px;color:#000">Details</div>
<div class="t" style="left:658px;top:507px;color:#808080">Search</div>
<div class="t" style="left:718px;top:507px;color:#808080">Export</div>
<div class="t" style="left:778px;top:507px;color:#808080">Options</div>
<div class="t" style="left:843px;top:507px;color:#808080">Trigger</div>
<div class="a" style="left:695px;top:506px;width:1px;height:15px;background:#ACA899"></div>
<div class="a" style="left:755px;top:506px;width:1px;height:15px;background:#ACA899"></div>
<div class="a" style="left:820px;top:506px;width:1px;height:15px;background:#ACA899"></div>
<div class="a" style="left:882px;top:506px;width:1px;height:15px;background:#ACA899"></div>
<svg style="left:580px;top:505px" width="15" height="15" viewBox="0 0 15 15" ><rect x="0.5" y="0.5" width="13" height="11" fill="#E8EEF8" stroke="#6080C0"/><rect x="0" y="0" width="14" height="2" fill="#3060D0"/><circle cx="8" cy="7" r="3.5" fill="#D0E4FA" stroke="#7090B0"/><path d="M5.5 9.5L1.5 13.5" stroke="#E08030" stroke-width="2"/></svg>
<svg style="left:639px;top:505px" width="16" height="16" viewBox="0 0 16 16" ><circle cx="10" cy="6" r="5" fill="#D8EAFC" stroke="#6E8AB0" stroke-width="1.2"/><path d="M6.5 9.5L1.5 14.5" stroke="#E07A30" stroke-width="2.6"/></svg>
<svg style="left:698px;top:503px" width="19" height="18" viewBox="0 0 19 18" ><circle cx="6.5" cy="5.5" r="4" fill="#F8C850" stroke="#A8A060" stroke-width="1" stroke-dasharray="1.2 0.9"/><circle cx="6.5" cy="5.5" r="1" fill="#C03020"/><circle cx="14" cy="6.5" r="3.6" fill="#20A850" stroke="#109030" stroke-width="1.2" stroke-dasharray="1.2 0.9"/><circle cx="13" cy="6" r="1.3" fill="#50C8D0"/><circle cx="9" cy="12" r="4.8" fill="#3A80F0" stroke="#0838B0" stroke-width="1.4" stroke-dasharray="1.4 1"/><circle cx="9" cy="11.5" r="1.5" fill="#082890"/></svg>
<svg style="left:758px;top:503px" width="19" height="18" viewBox="0 0 19 18" ><path d="M3.5 2.5H11.5V13.5L9 15H3.5Z" fill="#DCE8FC" stroke="#1850D0" stroke-width="1.2"/><path d="M5 9L7 11L9 5" stroke="#E0A020" stroke-width="1.2" fill="none"/><path d="M10 10L16 7" stroke="#3060C0" stroke-width="2.2"/><path d="M11.5 3V13" stroke="#101820" stroke-width="1.2"/><rect x="15" y="6" width="2" height="2" fill="#E04020"/></svg>
<svg style="left:822px;top:503px" width="20" height="18" viewBox="0 0 20 18" ><path d="M3.5 11.5L13.5 5L14.5 12L9.5 16.5Z" fill="#D8D8D8"/><path d="M3.5 11.5L13.5 5M3.5 12L9.5 16.5M9.5 16.5L14 12" stroke="#000" stroke-width="1.1" stroke-dasharray="1 1"/><path d="M15 2L19 2L16.5 8L18.5 8L16 17L16 10L14 10Z" fill="#F4E040" stroke="#E8A030" stroke-width="0.6"/></svg>
<div class="a" style="left:570px;top:531px;width:425px;height:16px;border:1px solid #C5C2B0;border-bottom-color:#A9A592;border-radius:2px;background:#ECE9D8"></div>
<div class="t" style="left:574px;top:534px;font-weight:bold;letter-spacing:0.3px">Data</div>
<svg style="left:967px;top:535px" width="9" height="10" viewBox="0 0 9 10" shape-rendering="crispEdges"><rect x="2" y="0" width="5" height="1" fill="#000"/><rect x="2" y="0" width="2" height="6" fill="#000"/><rect x="6" y="0" width="1" height="6" fill="#000"/><rect x="0" y="6" width="9" height="1" fill="#000"/><rect x="4" y="7" width="1" height="3" fill="#000"/></svg>
<svg style="left:982px;top:536px" width="8" height="8" viewBox="0 0 8 8" ><path d="M0.5 0.5L7.5 7.5M7.5 0.5L0.5 7.5" stroke="#000" stroke-width="0.9"/></svg>
<div class="a" style="left:570px;top:549px;width:425px;height:154px;border-top:1px solid #ACA899;border-left:1px solid #ACA899;border-bottom:1px solid #fff;background:#ECE9D8"></div>
<div class="a" style="left:571px;top:550px;width:424px;height:151px;border-top:1px solid #716F64;border-left:1px solid #716F64;background:#ECE9D8"></div>
<div class="a" style="left:616px;top:567px;width:224px;height:134px;background:#fff"></div>
<div class="a" style="left:844px;top:567px;width:88px;height:134px;background:#fff"></div>
<div class="a" style="left:572px;top:566px;width:405px;height:1px;background:#000"></div>
<div class="a" style="left:976px;top:551px;width:17px;height:150px;background:linear-gradient(90deg,#F3F1EC,#FEFEFB 60%,#F9F8F3)"></div>
<div class="a" style="left:977px;top:551px;width:15px;height:16px;border:1px solid #E6E5DF;border-radius:2px;background:linear-gradient(#F4F4F0,#E8E8E2)"><svg style="left:-1px;top:1px" width="15" height="11" viewBox="0 0 15 11"><path d="M3.5 7.5L7.5 3.5L11.5 7.5" fill="none" stroke="#C9C8C2" stroke-width="2.2"/></svg></div>
<div class="a" style="left:977px;top:684px;width:15px;height:16px;border:1px solid #E6E5DF;border-radius:2px;background:linear-gradient(#F4F4F0,#E8E8E2)"><svg style="left:-1px;top:1px" width="15" height="11" viewBox="0 0 15 11"><path d="M3.5 3.5L7.5 7.5L11.5 3.5" fill="none" stroke="#C9C8C2" stroke-width="2.2"/></svg></div>
<div class="t" style="left:628px;top:553px;font-family:'Liberation Sans',sans-serif;font-size:11.5px;line-height:15px;width:8px;text-align:center">0</div>
<div class="a" style="left:632px;top:564px;width:1px;height:2px;background:#000"></div>
<div class="t" style="left:852px;top:553px;font-family:'Liberation Sans',sans-serif;font-size:11.5px;line-height:15px;width:8px;text-align:center">0</div>
<div class="a" style="left:856px;top:564px;width:1px;height:2px;background:#000"></div>
<div class="t" style="left:652px;top:553px;font-family:'Liberation Sans',sans-serif;font-size:11.5px;line-height:15px;width:8px;text-align:center">1</div>
<div class="a" style="left:656px;top:564px;width:1px;height:2px;background:#000"></div>
<div class="t" style="left:860px;top:553px;font-family:'Liberation Sans',sans-serif;font-size:11.5px;line-height:15px;width:8px;text-align:center">1</div>
<div class="a" style="left:864px;top:564px;width:1px;height:2px;background:#000"></div>
<div class="t" style="left:676px;top:553px;font-family:'Liberation Sans',sans-serif;font-size:11.5px;line-height:15px;width:8px;text-align:center">2</div>
<div class="a" style="left:680px;top:564px;width:1px;height:2px;background:#000"></div>
<div class="t" style="left:868px;top:553px;font-family:'Liberation Sans',sans-serif;font-size:11.5px;line-height:15px;width:8px;text-align:center">2</div>
<div class="a" style="left:872px;top:564px;width:1px;height:2px;background:#000"></div>
<div class="t" style="left:700px;top:553px;font-family:'Liberation Sans',sans-serif;font-size:11.5px;line-height:15px;width:8px;text-align:center">3</div>
<div class="a" style="left:704px;top:564px;width:1px;height:2px;background:#000"></div>
<div class="t" style="left:876px;top:553px;font-family:'Liberation Sans',sans-serif;font-size:11.5px;line-height:15px;width:8px;text-align:center">3</div>
<div class="a" style="left:880px;top:564px;width:1px;height:2px;background:#000"></div>
<div class="t" style="left:724px;top:553px;font-family:'Liberation Sans',sans-serif;font-size:11.5px;line-height:15px;width:8px;text-align:center">4</div>
<div class="a" style="left:728px;top:564px;width:1px;height:2px;background:#000"></div>
<div class="t" style="left:884px;top:553px;font-family:'Liberation Sans',sans-serif;font-size:11.5px;line-height:15px;width:8px;text-align:center">4</div>
<div class="a" style="left:888px;top:564px;width:1px;height:2px;background:#000"></div>
<div class="t" style="left:748px;top:553px;font-family:'Liberation Sans',sans-serif;font-size:11.5px;line-height:15px;width:8px;text-align:center">5</div>
<div class="a" style="left:752px;top:564px;width:1px;height:2px;background:#000"></div>
<div class="t" style="left:892px;top:553px;font-family:'Liberation Sans',sans-serif;font-size:11.5px;line-height:15px;width:8px;text-align:center">5</div>
<div class="a" style="left:896px;top:564px;width:1px;height:2px;background:#000"></div>
<div class="t" style="left:772px;top:553px;font-family:'Liberation Sans',sans-serif;font-size:11.5px;line-height:15px;width:8px;text-align:center">6</div>
<div class="a" style="left:776px;top:564px;width:1px;height:2px;background:#000"></div>
<div class="t" style="left:900px;top:553px;font-family:'Liberation Sans',sans-serif;font-size:11.5px;line-height:15px;width:8px;text-align:center">6</div>
<div class="a" style="left:904px;top:564px;width:1px;height:2px;background:#000"></div>
<div class="t" style="left:796px;top:553px;font-family:'Liberation Sans',sans-serif;font-size:11.5px;line-height:15px;width:8px;text-align:center">7</div>
<div class="a" style="left:800px;top:564px;width:1px;height:2px;background:#000"></div>
<div class="t" style="left:908px;top:553px;font-family:'Liberation Sans',sans-serif;font-size:11.5px;line-height:15px;width:8px;text-align:center">7</div>
<div class="a" style="left:912px;top:564px;width:1px;height:2px;background:#000"></div>
<div class="t" style="left:820px;top:553px;font-family:'Liberation Sans',sans-serif;font-size:11.5px;line-height:15px;width:8px;text-align:center">8</div>
<div class="a" style="left:824px;top:564px;width:1px;height:2px;background:#000"></div>
<div class="t" style="left:916px;top:553px;font-family:'Liberation Sans',sans-serif;font-size:11.5px;line-height:15px;width:8px;text-align:center">8</div>
<div class="a" style="left:920px;top:564px;width:1px;height:2px;background:#000"></div>
<div class="a" style="left:632px;top:567px;width:8px;height:16px;background:#FFF570"></div>
<div class="a" style="left:852px;top:567px;width:8px;height:16px;background:#D8D8D8"></div>
<div class="t" style="left:598px;top:569px;font-family:'Liberation Sans',sans-serif;font-size:11.5px;line-height:15px;width:8px;text-align:center">0</div>
<div class="t" style="left:607px;top:569px;font-family:'Liberation Sans',sans-serif;font-size:11.5px;line-height:15px;width:8px;text-align:center">:</div>
<div class="t" style="left:624px;top:569px;font-family:'Liberation Sans',sans-serif;font-size:11.5px;line-height:15px;width:8px;text-align:center">0</div>
<div class="t" style="left:632px;top:569px;font-family:'Liberation Sans',sans-serif;font-size:11.5px;line-height:15px;width:8px;text-align:center">2</div>
<div class="t" style="left:648px;top:569px;font-family:'Liberation Sans',sans-serif;font-size:11.5px;line-height:15px;width:8px;text-align:center">0</div>
<div class="t" style="left:656px;top:569px;font-family:'Liberation Sans',sans-serif;font-size:11.5px;line-height:15px;width:8px;text-align:center">0</div>
<div class="t" style="left:852px;top:570px;font-family:'Liberation Mono',monospace;font-size:12px;line-height:15px;letter-spacing:0.8px">..</div>
<div class="a" style="left:624px;top:567px;width:2px;height:16px;background:#A8B0C0"></div>
<div class="t" style="left:5px;top:707px">Ready</div>
<div class="a" style="left:850px;top:707px;width:2px;height:13px;background:#C5C2B2;border-right:1px solid #fff"></div>
<div class="a" style="left:879px;top:707px;width:2px;height:13px;background:#C5C2B2;border-right:1px solid #fff"></div>
<div class="a" style="left:913px;top:707px;width:2px;height:13px;background:#C5C2B2;border-right:1px solid #fff"></div>
<div class="a" style="left:975px;top:707px;width:2px;height:13px;background:#C5C2B2;border-right:1px solid #fff"></div>
<div class="t" style="left:855px;top:707px">NUM</div>
<div class="t" style="left:918px;top:707px">2.1.2200.0</div>
<div class="a" style="left:991px;top:709px;width:2px;height:2px;background:#C5C2B2"></div>
<div class="a" style="left:987px;top:713px;width:2px;height:2px;background:#C5C2B2"></div>
<div class="a" style="left:991px;top:713px;width:2px;height:2px;background:#C5C2B2"></div>
<div class="a" style="left:983px;top:717px;width:2px;height:2px;background:#C5C2B2"></div>
<div class="a" style="left:987px;top:717px;width:2px;height:2px;background:#C5C2B2"></div>
<div class="a" style="left:991px;top:717px;width:2px;height:2px;background:#C5C2B2"></div>
</body></html>
